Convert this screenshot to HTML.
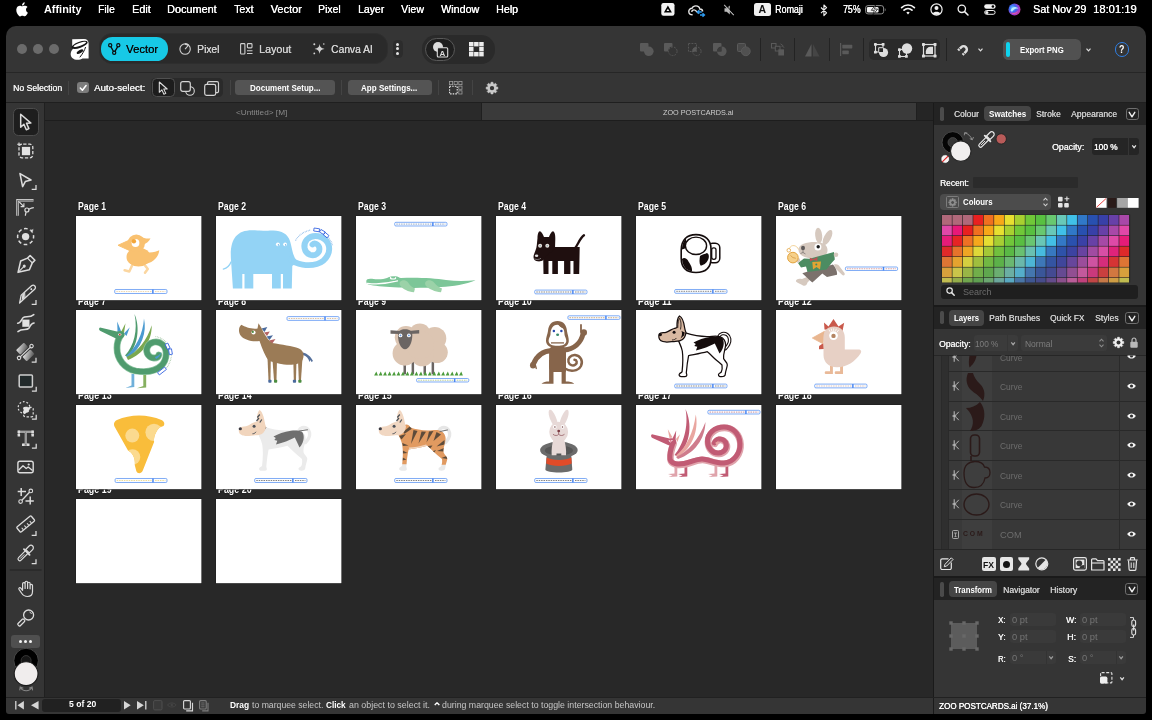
<!DOCTYPE html>
<html lang="en">
<head>
<meta charset="utf-8">
<title>Affinity - ZOO POSTCARDS.ai</title>
<style>
*{box-sizing:border-box;margin:0;padding:0}
html,body{width:1152px;height:720px;overflow:hidden;background:#000}
body{font-family:"Liberation Sans","DejaVu Sans",sans-serif;color:#fff;font-size:9px;position:relative}
.abs{position:absolute}
svg{display:block;overflow:visible}
.t{position:absolute;white-space:nowrap;transform-origin:0 50%}
#menubar{will-change:transform;position:absolute;left:0;top:0;width:1152px;height:26px;background:#000}
#win{will-change:transform;position:absolute;left:0;top:0;width:1152px;height:720px;background:#282828;clip-path:inset(26px 6px 6px 6px round 10px 10px 3px 3px)}
section{position:absolute;left:0;top:0;width:0;height:0}

</style>
</head>
<body>
<div id="menubar">
<svg class="abs" style="left:15.8px;top:1.6px;" width="12" height="14" viewBox="0 0 12 14"><path fill="#fff" d="M8.9 3.4c.5-.6.9-1.5.8-2.4-.8 0-1.7.5-2.3 1.200-.5.6-.9 1.500-.8 2.300.9.100 1.800-.4 2.300-1.100zM9.700 4.700c-1.300-.100-2.400.7-3 .7-.6 0-1.500-.7-2.500-.7C2.900 4.700 1.700 5.500 1 6.700c-1.400 2.400-.4 6 1 7.900.7.900 1.500 2 2.500 2 1 0 1.400-.7 2.600-.7 1.200 0 1.500.7 2.600.6 1.100 0 1.700-1 2.400-1.900.8-1.100 1.100-2.100 1.100-2.200 0 0-2.100-.8-2.100-3.200 0-2 1.600-2.900 1.700-3-.9-1.400-2.400-1.500-2.900-1.500z" transform="scale(.9) translate(0,-.6)"/></svg>
<div class="t" style="left:43.7px;top:3px;font-size:11px;line-height:12px;height:12px;color:#fff;transform:scaleX(0.990);font-weight:bold;">Affinity</div>
<div class="t" style="left:98.2px;top:3px;font-size:11px;line-height:12px;height:12px;color:#fff;transform:scaleX(0.937);text-shadow:.3px 0 0 #fff;">File</div>
<div class="t" style="left:131.9px;top:3px;font-size:11px;line-height:12px;height:12px;color:#fff;transform:scaleX(0.981);text-shadow:.3px 0 0 #fff;">Edit</div>
<div class="t" style="left:167.0px;top:3px;font-size:11px;line-height:12px;height:12px;color:#fff;transform:scaleX(0.987);text-shadow:.3px 0 0 #fff;">Document</div>
<div class="t" style="left:234.0px;top:3px;font-size:11px;line-height:12px;height:12px;color:#fff;transform:scaleX(0.967);text-shadow:.3px 0 0 #fff;">Text</div>
<div class="t" style="left:270.6px;top:3px;font-size:11px;line-height:12px;height:12px;color:#fff;text-shadow:.3px 0 0 #fff;">Vector</div>
<div class="t" style="left:318.4px;top:3px;font-size:11px;line-height:12px;height:12px;color:#fff;transform:scaleX(0.944);text-shadow:.3px 0 0 #fff;">Pixel</div>
<div class="t" style="left:357.5px;top:3px;font-size:11px;line-height:12px;height:12px;color:#fff;transform:scaleX(0.949);text-shadow:.3px 0 0 #fff;">Layer</div>
<div class="t" style="left:401.0px;top:3px;font-size:11px;line-height:12px;height:12px;color:#fff;transform:scaleX(0.964);text-shadow:.3px 0 0 #fff;">View</div>
<div class="t" style="left:440.9px;top:3px;font-size:11px;line-height:12px;height:12px;color:#fff;transform:scaleX(0.974);text-shadow:.3px 0 0 #fff;">Window</div>
<div class="t" style="left:496.0px;top:3px;font-size:11px;line-height:12px;height:12px;color:#fff;transform:scaleX(0.972);text-shadow:.3px 0 0 #fff;">Help</div>
<svg class="abs" style="left:661px;top:3px;" width="14" height="13" viewBox="0 0 14 13"><rect x=".3" y="0" width="13.2" height="12.8" rx="2.2" fill="#f2f2f2"/><path d="M6.9 2.600 L10.900 9.600 H2.900 Z M6.900 5.700 L5.500 8.100 H8.300 Z" fill="#000" fill-rule="evenodd"/></svg>
<svg class="abs" style="left:688px;top:4.5px;" width="18" height="12" viewBox="0 0 18 12"><path d="M4.600 9.800 C1.800 9.800 .8 7.900 .8 6.500 C.8 4.700 2.200 3.300 4 3.300 C4.700 1.700 6.200 .9 7.800 .9 C10.200 .9 11.600 2.600 11.800 4 C13.600 4 14.600 5.200 14.600 6.500" fill="none" stroke="#e6e6e6" stroke-width="1.400"/><path d="M3.800 7 C3.800 5.600 5 4.800 6 4.800 C7.500 4.800 8 5.900 9 6.900 L10.500 8.400" fill="none" stroke="#e6e6e6" stroke-width="1.300"/><path d="M9.300 7 h4.500 M11.300 5.300 L9.300 7 l2 1.700 M16.500 10 h-4.500 M14.500 8.300 l2 1.700 -2 1.700" fill="none" stroke="#2d9bf0" stroke-width="1.300"/></svg>
<svg class="abs" style="left:723px;top:4px;" width="12" height="12" viewBox="0 0 12 12"><path d="M1.500 4.300 h2.200 L6.800 1.500 v9 L3.700 7.700 H1.500z" fill="#b9b9b9"/><path d="M1.200 .8 L10.800 11.200" stroke="#b9b9b9" stroke-width="1.100"/><path d="M2.200 .3 L11.600 10.600" stroke="#000" stroke-width=".8"/></svg>
<div class="abs" style="left:753.7px;top:2.6px;width:17.299999999999955px;height:13.200000000000001px;background:#f0f0f0;border-radius:2.5px;"></div>
<div class="t" style="left:758.6px;top:3px;font-size:10.5px;line-height:12px;height:12px;color:#111;font-weight:bold;">A</div>
<div class="t" style="left:775.2px;top:4px;font-size:10px;line-height:11px;height:11px;color:#fff;transform:scaleX(0.893);text-shadow:.25px 0 0 #fff;">Romaji</div>
<svg class="abs" style="left:820px;top:3.5px;" width="8" height="13" viewBox="0 0 8 13"><path d="M1 3.500 L6.600 8.900 L3.900 11.600 V1 L6.600 3.700 L1 9.100" fill="none" stroke="#f2f2f2" stroke-width="1.100" stroke-linejoin="round"/></svg>
<div class="t" style="left:843.0px;top:3px;font-size:10.5px;line-height:12px;height:12px;color:#fff;transform:scaleX(0.833);text-shadow:.3px 0 0 #fff;">75%</div>
<svg class="abs" style="left:864.5px;top:5px;" width="22" height="10" viewBox="0 0 22 10"><rect x=".6" y=".6" width="18" height="8.300" rx="2.400" fill="none" stroke="#8c8c8c" stroke-width="1"/><rect x="1.900" y="1.900" width="11.600" height="5.700" rx="1.300" fill="#f2f2f2"/><path d="M19.800 3.200 c1.100.2 1.100 2.900 0 3.100z" fill="#8c8c8c"/><path d="M10.600 -.2 L6.300 5.300 h3 L8 9.800 l4.600-5.700 h-3.100z" fill="#f2f2f2" stroke="#000" stroke-width=".7"/></svg>
<svg class="abs" style="left:901px;top:4px;" width="14" height="11" viewBox="0 0 14 11"><path d="M.6 3.600 C4.200 .1 9.800 .1 13.400 3.600" fill="none" stroke="#f2f2f2" stroke-width="1.700" stroke-linecap="round"/><path d="M3 6.200 C5.300 4 8.700 4 11 6.200" fill="none" stroke="#f2f2f2" stroke-width="1.700" stroke-linecap="round"/><path d="M5.300 8.500 C6.300 7.600 7.700 7.600 8.700 8.500 L7 10.400z" fill="#f2f2f2"/></svg>
<svg class="abs" style="left:929.5px;top:3px;" width="13" height="13" viewBox="0 0 13 13"><circle cx="6.500" cy="6.500" r="5.600" fill="none" stroke="#f2f2f2" stroke-width="1.200"/><circle cx="6.500" cy="5" r="2" fill="#f2f2f2"/><path d="M2.700 10.300 C3.500 8.200 9.500 8.200 10.300 10.300 C8.500 12.300 4.500 12.300 2.700 10.300z" fill="#f2f2f2"/></svg>
<svg class="abs" style="left:956.5px;top:3.5px;" width="12" height="12" viewBox="0 0 12 12"><circle cx="4.800" cy="4.800" r="3.700" fill="none" stroke="#f2f2f2" stroke-width="1.300"/><path d="M7.600 7.600 L11 11" stroke="#f2f2f2" stroke-width="1.500" stroke-linecap="round"/></svg>
<svg class="abs" style="left:983.5px;top:4px;" width="12" height="11" viewBox="0 0 12 11"><rect x=".2" y=".2" width="11.400" height="4.600" rx="2.300" fill="#f2f2f2"/><circle cx="8.900" cy="2.500" r="1.300" fill="#000"/><rect x=".7" y="6.500" width="10.400" height="3.800" rx="1.900" fill="none" stroke="#f2f2f2" stroke-width="1"/><circle cx="2.900" cy="8.400" r="1.500" fill="#f2f2f2"/></svg>
<svg class="abs" style="left:1008px;top:3px;" width="13" height="13" viewBox="0 0 13 13"><defs><radialGradient id="sg" cx=".35" cy=".4" r=".8"><stop offset="0" stop-color="#6fd0ff"/><stop offset=".35" stop-color="#3a6cf0"/><stop offset=".65" stop-color="#a03ad0"/><stop offset="1" stop-color="#e04070"/></radialGradient></defs><circle cx="6.500" cy="6.500" r="6" fill="url(#sg)"/><path d="M2.500 7.500 C4.500 3 8 3.500 10.500 5.500 C8 5 5.500 6 4 9z" fill="#c8f4ff" opacity=".85"/><path d="M3 9.500 C5 10.500 8.500 10 10.500 7.500 C9 11.500 5 12 3 9.500z" fill="#ff5a90" opacity=".8"/></svg>
<div class="t" style="left:1032.7px;top:3px;font-size:11px;line-height:12px;height:12px;color:#fff;transform:scaleX(0.979);text-shadow:.3px 0 0 #fff;">Sat Nov 29</div>
<div class="t" style="left:1093.0px;top:3px;font-size:11px;line-height:12px;height:12px;color:#fff;transform:scaleX(1.018);text-shadow:.3px 0 0 #fff;">18:01:19</div>
</div>
<div id="win">
<section id="toolbar">
<div class="abs" style="left:6px;top:26px;width:1140px;height:46px;background:#353535;"></div>
<div class="abs" style="left:6px;top:71.5px;width:1140px;height:1.0px;background:#262626;"></div>
<div class="abs" style="left:16.5px;top:44px;width:10.0px;height:10px;background:#6b6b6b;border-radius:5px;"></div>
<div class="abs" style="left:32.5px;top:44px;width:10.0px;height:10px;background:#6b6b6b;border-radius:5px;"></div>
<div class="abs" style="left:48.5px;top:44px;width:10.0px;height:10px;background:#6b6b6b;border-radius:5px;"></div>
<svg class="abs" style="left:70px;top:38px;" width="19" height="22" viewBox="0 0 19 22"><path d="M2.200 1.300 L14 .9 C17 .9 18.600 2.800 18.600 5.500 L18.600 20.500 L12.500 20.500 C10 22.300 4.800 22.500 2.300 20 C-.3 17.300 .3 13 3.800 10 L2.200 8.500 Z" fill="#fff"/><ellipse cx="9.600" cy="6.900" rx="8.600" ry="3" transform="rotate(-20 9.600 6.900)" fill="#171717"/><ellipse cx="9.800" cy="6.300" rx="6.700" ry="1.450" transform="rotate(-20 9.800 6.300)" fill="#fff"/><ellipse cx="10" cy="13.700" rx="3.700" ry="1.550" transform="rotate(-30 10 13.700)" fill="#171717"/><path d="M15.600 9 C14.500 12.500 12.500 16 9.800 19.300" fill="none" stroke="#171717" stroke-width="1"/></svg>
<div class="abs" style="left:98.5px;top:33px;width:289.0px;height:30.5px;background:#2a2a2a;border-radius:13px;border:1px solid #2e2e2e;"></div>
<div class="abs" style="left:101px;top:36.5px;width:67.30000000000001px;height:24.5px;background:#17c9e6;border-radius:11.5px;"></div>
<svg class="abs" style="left:107.5px;top:42.7px;" width="13" height="13" viewBox="0 0 13 13"><path d="M2.300 2.600 L6.200 9.700 L10.300 2.600" fill="none" stroke="#0c0c0c" stroke-width="1.300"/><circle cx="2.200" cy="2.300" r="1.600" fill="#17c9e6" stroke="#0c0c0c" stroke-width="1.200"/><circle cx="10.300" cy="2.300" r="1.600" fill="#17c9e6" stroke="#0c0c0c" stroke-width="1.200"/><circle cx="6.200" cy="9.800" r="1.600" fill="#17c9e6" stroke="#0c0c0c" stroke-width="1.200"/></svg>
<div class="t" style="left:126.2px;top:43px;font-size:10.5px;line-height:12px;height:12px;color:#0a0a0a;transform:scaleX(1.075);text-shadow:.3px 0 0 #0a0a0a;">Vector</div>
<svg class="abs" style="left:178.5px;top:42.7px;" width="12" height="12" viewBox="0 0 12 12"><circle cx="6.100" cy="6.100" r="5.200" fill="none" stroke="#cfcfcf" stroke-width="1.100"/><path d="M6.100 6.100 L9.200 2.500" stroke="#cfcfcf" stroke-width="1.100"/><path d="M6.100 1 A5.200 5.200 0 0 1 9.600 2.300" stroke="#cfcfcf" stroke-width="1.800" fill="none"/></svg>
<div class="t" style="left:196.9px;top:43px;font-size:10.5px;line-height:12px;height:12px;color:#d2d2d2;transform:scaleX(0.984);text-shadow:.25px 0 0 #d2d2d2;">Pixel</div>
<svg class="abs" style="left:240px;top:43px;" width="13" height="12" viewBox="0 0 13 12"><rect x=".6" y=".6" width="4.300" height="10.400" rx=".8" fill="none" stroke="#cfcfcf" stroke-width="1.100"/><rect x="7.400" y=".6" width="4.600" height="4.300" rx=".8" fill="none" stroke="#cfcfcf" stroke-width="1.100"/><path d="M7 7.800 h5.500 M7 10.500 h5.500" stroke="#cfcfcf" stroke-width="1.100"/></svg>
<div class="t" style="left:258.5px;top:43px;font-size:10.5px;line-height:12px;height:12px;color:#d2d2d2;transform:scaleX(1.018);text-shadow:.25px 0 0 #d2d2d2;">Layout</div>
<svg class="abs" style="left:311.5px;top:42px;" width="14" height="14" viewBox="0 0 14 14"><path d="M7.600 1.800 C8.100 5.200 9 6.300 12.600 6.900 C9 7.500 8.100 8.600 7.600 12 C7.100 8.600 6.200 7.500 2.600 6.900 C6.200 6.300 7.100 5.200 7.600 1.800Z" fill="#d2d2d2"/><circle cx="2.300" cy="2.300" r="1" fill="#d2d2d2"/><circle cx="11.800" cy="2" r=".8" fill="#d2d2d2"/><circle cx="2.300" cy="11.400" r=".9" fill="#d2d2d2"/></svg>
<div class="t" style="left:330.8px;top:43px;font-size:10.5px;line-height:12px;height:12px;color:#d2d2d2;transform:scaleX(0.979);text-shadow:.25px 0 0 #d2d2d2;">Canva AI</div>
<div class="abs" style="left:393px;top:40px;width:9.5px;height:18px;background:#2c2c2c;border-radius:4.5px;"></div>
<div class="abs" style="left:396.1px;top:42.6px;width:3.1999999999999886px;height:3.200000000000003px;background:#e4e4e4;border-radius:1.6px;"></div>
<div class="abs" style="left:396.1px;top:47.199999999999996px;width:3.1999999999999886px;height:3.200000000000003px;background:#e4e4e4;border-radius:1.6px;"></div>
<div class="abs" style="left:396.1px;top:51.9px;width:3.1999999999999886px;height:3.200000000000003px;background:#e4e4e4;border-radius:1.6px;"></div>
<div class="abs" style="left:421.7px;top:35px;width:72.90000000000003px;height:28.5px;background:#2a2a2a;border-radius:14px;"></div>
<div class="abs" style="left:424.8px;top:38px;width:30.19999999999999px;height:23px;background:#1f1f1f;border-radius:11.5px;border:1px solid #595959;"></div>
<svg class="abs" style="left:432px;top:41px;" width="17" height="17" viewBox="0 0 17 17"><circle cx="6" cy="6" r="5" fill="#dcdcdc"/><rect x="5.300" y="6.700" width="10.400" height="9.300" rx="1" fill="#1f1f1f" stroke="#dcdcdc" stroke-width="1.100"/><text x="10.500" y="14.600" font-size="8" font-weight="bold" text-anchor="middle" fill="#dcdcdc" font-family="Liberation Sans, sans-serif">A</text></svg>
<svg class="abs" style="left:469px;top:42px;" width="15" height="15" viewBox="0 0 15 15"><rect x="0.0" y="0.0" width="4.500" height="4.400" fill="#ececec"/><rect x="5.1" y="0.0" width="4.500" height="4.400" fill="#ececec"/><rect x="10.2" y="0.0" width="4.500" height="4.400" fill="#ececec"/><rect x="0.0" y="5.0" width="4.500" height="4.400" fill="#ececec"/><rect x="10.2" y="5.0" width="4.500" height="4.400" fill="#ececec"/><rect x="0.0" y="10.0" width="4.500" height="4.400" fill="#ececec"/><rect x="5.1" y="10.0" width="4.500" height="4.400" fill="#ececec"/><rect x="10.2" y="10.0" width="4.500" height="4.400" fill="#ececec"/></svg>
<svg class="abs" style="left:640.4px;top:43px;" width="14" height="13" viewBox="0 0 14 13"><rect x="0" y="0" width="8.500" height="8.500" rx="1" fill="#5a5a5a"/><circle cx="8.800" cy="8.300" r="4.800" fill="#5a5a5a"/></svg>
<svg class="abs" style="left:664.4px;top:43px;" width="14" height="13" viewBox="0 0 14 13"><path d="M0 1 a1 1 0 0 1 1-1 h6.500 a1 1 0 0 1 1 1 v2.600 A4.800 4.800 0 0 0 4.100 8.500 H1 a1 1 0 0 1 -1 -1z" fill="#5a5a5a"/><circle cx="8.800" cy="8.300" r="4.300" fill="none" stroke="#5a5a5a" stroke-width=".9" stroke-dasharray="1.800 1.200"/></svg>
<svg class="abs" style="left:688px;top:43px;" width="14" height="13" viewBox="0 0 14 13"><rect x=".5" y=".5" width="8" height="8" fill="none" stroke="#5a5a5a" stroke-width=".9" stroke-dasharray="1.800 1.200"/><circle cx="8.800" cy="8.300" r="4.300" fill="none" stroke="#5a5a5a" stroke-width=".9" stroke-dasharray="1.800 1.200"/><path d="M4.300 8.500 A4.600 4.600 0 0 1 8.500 3.700 V8.500z" fill="#5a5a5a"/></svg>
<svg class="abs" style="left:712.7px;top:43px;" width="14" height="13" viewBox="0 0 14 13"><path d="M0 1 a1 1 0 0 1 1-1 h6.500 a1 1 0 0 1 1 1 v2.600 A4.800 4.800 0 0 0 4.100 8.500 H1 a1 1 0 0 1 -1 -1z" fill="#5a5a5a"/><path d="M8.500 3.500 A4.800 4.800 0 1 1 4 8.500 H8.500z" fill="#5a5a5a" opacity=".95"/><path d="M4.300 8.300 A4.600 4.600 0 0 1 8.300 3.800 V8.300z" fill="#3b3b3b"/></svg>
<svg class="abs" style="left:736.7px;top:43px;" width="14" height="13" viewBox="0 0 14 13"><rect x=".5" y=".5" width="8" height="8" rx="1" fill="#484848" stroke="#5a5a5a" stroke-width="1"/><circle cx="8.800" cy="8.300" r="4.400" fill="#505050" stroke="#5a5a5a" stroke-width="1"/></svg>
<div class="abs" style="left:760.1px;top:38px;width:1.0px;height:22.5px;background:#232323;"></div>
<div class="abs" style="left:794.1px;top:38px;width:1.0px;height:22.5px;background:#232323;"></div>
<div class="abs" style="left:828.9px;top:38px;width:1.0px;height:22.5px;background:#232323;"></div>
<div class="abs" style="left:862.8px;top:38px;width:1.0px;height:22.5px;background:#232323;"></div>
<div class="abs" style="left:945.5px;top:38px;width:1.0px;height:22.5px;background:#232323;"></div>
<svg class="abs" style="left:770.6px;top:43px;" width="14" height="13" viewBox="0 0 14 13"><rect x=".5" y=".5" width="4.500" height="4.500" fill="none" stroke="#5a5a5a" stroke-width="1"/><rect x="4.300" y="3.300" width="4.700" height="4.700" fill="#333" stroke="#5a5a5a" stroke-width="1"/><path d="M7.300 6.300 h5.700 v6.200 h-5.700z" fill="#5a5a5a"/><path d="M9.500 .8 l2.300 1.700 -1 1.300 M11.300 2.700 l1.700 2" stroke="#5a5a5a" stroke-width=".9" fill="none"/></svg>
<svg class="abs" style="left:805px;top:43.5px;" width="15" height="13" viewBox="0 0 15 13"><path d="M6.500 0 V12.500 H0z" fill="#5a5a5a"/><path d="M8 0 V12.500 H14.500z" fill="#454545"/></svg>
<svg class="abs" style="left:840px;top:43px;" width="13" height="13" viewBox="0 0 13 13"><path d="M.6 0 V13" stroke="#5a5a5a" stroke-width="1.200"/><rect x="2.300" y="1.800" width="10" height="3.600" rx=".6" fill="#5a5a5a"/><rect x="2.300" y="7.600" width="6.500" height="3.600" rx=".6" fill="#5a5a5a"/></svg>
<div class="abs" style="left:868.5px;top:38.7px;width:71.89999999999998px;height:21.599999999999994px;background:#2a2a2a;border-radius:5px;"></div>
<svg class="abs" style="left:873.7px;top:42.5px;" width="15" height="15" viewBox="0 0 15 15"><rect x="1.500" y="1.500" width="7.500" height="7.500" fill="none" stroke="#dedede" stroke-width="1.100"/><circle cx="9.500" cy="9.500" r="4.600" fill="#dedede"/><path d="M4.200 4.200 h4.800 v4.800 h-4.800z" fill="#2a2a2a"/><path d="M4.700 9 V4.700 H9" fill="none" stroke="#dedede" stroke-width="1"/><g fill="#dedede"><rect x="0" y="0" width="2.800" height="2.800" rx=".6"/><rect x="7.700" y="0" width="2.800" height="2.800" rx=".6"/><rect x="0" y="7.700" width="2.800" height="2.800" rx=".6"/></g></svg>
<svg class="abs" style="left:897.7px;top:42.5px;" width="15" height="15" viewBox="0 0 15 15"><circle cx="9" cy="5.500" r="5.200" fill="#dedede"/><rect x="1.500" y="6.500" width="7" height="7" fill="none" stroke="#dedede" stroke-width="1.100"/><g fill="#dedede"><rect x="0" y="5.200" width="2.800" height="2.800" rx=".6"/><rect x="0" y="12" width="2.800" height="2.800" rx=".6"/><rect x="7" y="12" width="2.800" height="2.800" rx=".6"/></g></svg>
<svg class="abs" style="left:922px;top:42.5px;" width="15" height="15" viewBox="0 0 15 15"><rect x="1.500" y="1.500" width="11.500" height="11.500" fill="none" stroke="#dedede" stroke-width="1.200"/><path d="M3.800 11 V8.500 A4.800 4.800 0 0 1 8.500 3.800 H11 V11z" fill="#dedede"/><g fill="#dedede"><rect x="0" y="0" width="2.900" height="2.900" rx=".6"/><rect x="11.600" y="0" width="2.900" height="2.900" rx=".6"/><rect x="0" y="11.600" width="2.900" height="2.900" rx=".6"/><rect x="11.600" y="11.600" width="2.900" height="2.900" rx=".6"/></g></svg>
<svg class="abs" style="left:955.3px;top:41.5px;" width="16" height="16" viewBox="0 0 16 16"><g transform="translate(8.200 7.800) rotate(45)"><path d="M-3.200 4 V-.6 A3.200 3.200 0 0 1 3.200 -.6 V4" fill="none" stroke="#dedede" stroke-width="2.500"/><path d="M-4.700 1.900 H-1.700 M1.700 1.900 H4.700" stroke="#353535" stroke-width=".9"/></g></svg>
<svg class="abs" style="left:977.5px;top:48px;" width="5" height="4" viewBox="0 0 5 4"><path d="M.5 .6 L2.500 2.800 L4.500 .6" fill="none" stroke="#dedede" stroke-width="1.200"/></svg>
<div class="abs" style="left:1003px;top:38.7px;width:77.59999999999991px;height:21.599999999999994px;background:#515151;border-radius:5.5px;"></div>
<div class="abs" style="left:1006.2px;top:42px;width:4.0px;height:15px;background:#0fd3ee;border-radius:2px;"></div>
<div class="t" style="left:1019.6px;top:45px;font-size:9px;line-height:10px;height:10px;color:#fff;transform:scaleX(0.865);font-weight:bold;">Export PNG</div>
<svg class="abs" style="left:1085.5px;top:48px;" width="5" height="4" viewBox="0 0 5 4"><path d="M.5 .6 L2.500 2.800 L4.500 .6" fill="none" stroke="#dedede" stroke-width="1.200"/></svg>
<div class="abs" style="left:1114.7px;top:42.4px;width:14.599999999999909px;height:14.600000000000001px;border-radius:7.3px;border:1.300px solid #2f80e6;"></div>
<div class="t" style="left:1119.4px;top:44px;font-size:10px;line-height:11px;height:11px;color:#fff;transform:scaleX(0.884);font-weight:bold;">?</div>
</section>
<section id="context">
<div class="abs" style="left:6px;top:72.5px;width:1140px;height:29.5px;background:#353535;"></div>
<div class="abs" style="left:6px;top:101.5px;width:1140px;height:1.0px;background:#1f1f1f;"></div>
<div class="t" style="left:12.9px;top:83px;font-size:9px;line-height:10px;height:10px;color:#f4f4f4;transform:scaleX(0.960);text-shadow:.25px 0 0 #f4f4f4;">No Selection</div>
<div class="abs" style="left:67.5px;top:80.5px;width:1.0px;height:14.0px;background:#444444;"></div>
<div class="abs" style="left:77.3px;top:81.7px;width:11.900000000000006px;height:11.599999999999994px;background:#7c7c7c;border-radius:3px;"></div>
<svg class="abs" style="left:77px;top:81.8px;" width="12.2" height="11.8" viewBox="0 0 12.2 11.8"><path d="M3.300 6.100 L5.400 8.300 L9.100 3.500" fill="none" stroke="#fff" stroke-width="1.500" stroke-linecap="round" stroke-linejoin="round"/></svg>
<div class="t" style="left:93.7px;top:83px;font-size:9px;line-height:10px;height:10px;color:#f4f4f4;transform:scaleX(1.075);text-shadow:.25px 0 0 #f4f4f4;">Auto-select:</div>
<div class="abs" style="left:151px;top:78px;width:71.5px;height:19.200000000000003px;background:#2a2a2a;border-radius:4.5px;"></div>
<div class="abs" style="left:151.5px;top:78.2px;width:23.30000000000001px;height:18.799999999999997px;background:#1d1d1d;border-radius:4.5px;border:1px solid #505050;"></div>
<svg class="abs" style="left:158px;top:80.5px;" width="11" height="15" viewBox="0 0 11 15"><path d="M1.300 1 L1.300 11.300 L3.900 8.900 L5.900 13.300 L7.800 12.400 L5.800 8.100 L9.200 8 Z" fill="#1d1d1d" stroke="#e0e0e0" stroke-width="1.050" stroke-linejoin="round"/></svg>
<svg class="abs" style="left:180px;top:80.7px;" width="15" height="15" viewBox="0 0 15 15"><circle cx="10" cy="10" r="4.300" fill="none" stroke="#d4d4d4" stroke-width="1.100"/><rect x=".7" y=".7" width="9.600" height="9.600" rx="2" fill="#2a2a2a" stroke="#d4d4d4" stroke-width="1.200"/></svg>
<svg class="abs" style="left:203.5px;top:80.7px;" width="15" height="15" viewBox="0 0 15 15"><path d="M3.500 3 V2.200 a1.500 1.500 0 0 1 1.500-1.500 h8 a1.500 1.500 0 0 1 1.500 1.500 v8 a1.500 1.500 0 0 1 -1.500 1.500 H12" fill="none" stroke="#d4d4d4" stroke-width="1.200"/><rect x=".7" y="3.400" width="11" height="11" rx="1.800" fill="none" stroke="#d4d4d4" stroke-width="1.200"/></svg>
<div class="abs" style="left:229.5px;top:80.3px;width:1.0px;height:14.400000000000006px;background:#444444;"></div>
<div class="abs" style="left:340.5px;top:80.3px;width:1.0px;height:14.400000000000006px;background:#444444;"></div>
<div class="abs" style="left:437.8px;top:80.3px;width:1.0px;height:14.400000000000006px;background:#444444;"></div>
<div class="abs" style="left:472.2px;top:80.3px;width:1.0px;height:14.400000000000006px;background:#444444;"></div>
<div class="abs" style="left:235.4px;top:80px;width:99.4px;height:15px;background:#545454;border-radius:3.5px;"></div>
<div class="t" style="left:249.8px;top:83px;font-size:9px;line-height:10px;height:10px;color:#fff;transform:scaleX(0.891);font-weight:bold;">Document Setup...</div>
<div class="abs" style="left:347.7px;top:80px;width:84.0px;height:15px;background:#545454;border-radius:3.5px;"></div>
<div class="t" style="left:361.2px;top:83px;font-size:9px;line-height:10px;height:10px;color:#fff;transform:scaleX(0.894);font-weight:bold;">App Settings...</div>
<svg class="abs" style="left:448.7px;top:80.8px;" width="14" height="14" viewBox="0 0 14 14"><rect x="0.4" y=".4" width="3.200" height="3.200" fill="none" stroke="#9c9c9c" stroke-width=".8"/><rect x="5.1000000000000005" y=".4" width="3.200" height="3.200" fill="none" stroke="#9c9c9c" stroke-width=".8"/><rect x="9.8" y=".4" width="3.200" height="3.200" fill="none" stroke="#9c9c9c" stroke-width=".8"/><rect x="9.800" y="5.1000000000000005" width="3.200" height="3.200" fill="none" stroke="#9c9c9c" stroke-width=".8"/><rect x="9.800" y="9.8" width="3.200" height="3.200" fill="none" stroke="#9c9c9c" stroke-width=".8"/><rect x=".6" y="5.300" width="7.600" height="7.600" fill="none" stroke="#e8e8e8" stroke-width="1.100" stroke-dasharray="1.500 1.100"/></svg>
<svg class="abs" style="left:484px;top:79.5px;" width="16" height="16" viewBox="0 0 16 16"><path d="M13.81 7.10 L13.81 9.10 L12.20 9.31 L11.82 10.21 L12.82 11.51 L11.41 12.92 L10.11 11.92 L9.21 12.30 L9.00 13.91 L7.00 13.91 L6.79 12.30 L5.89 11.92 L4.59 12.92 L3.18 11.51 L4.18 10.21 L3.80 9.31 L2.19 9.10 L2.19 7.10 L3.80 6.89 L4.18 5.99 L3.18 4.69 L4.59 3.28 L5.89 4.28 L6.79 3.90 L7.00 2.29 L9.00 2.29 L9.21 3.90 L10.11 4.28 L11.41 3.28 L12.82 4.69 L11.82 5.99 L12.20 6.89Z" fill="#c9c9c9" stroke="#c9c9c9" stroke-width=".6" stroke-linejoin="round"/><circle cx="8" cy="8.1" r="2.2" fill="#353535"/></svg>
</section>
<section id="tools">
<div class="abs" style="left:6px;top:102.5px;width:38px;height:595.0px;background:#353535;"></div>
<div class="abs" style="left:43.6px;top:102.5px;width:1.0px;height:595.0px;background:#202020;"></div>
<div class="abs" style="left:12.5px;top:108.2px;width:26.700000000000003px;height:27.39999999999999px;background:#1e1e1e;border-radius:5.5px;border:1.200px solid #4c4c4c;"></div>
<svg class="abs" style="left:0px;top:0px;" width="50" height="720" viewBox="0 0 50 720"><path d="M20.700 114.300 L20.700 127.300 L23.900 124.300 L26.300 129.800 L28.900 128.600 L26.500 123.300 L30.900 123.100 Z" fill="#1e1e1e" stroke="#dcdcdc" stroke-width="1.500" stroke-linejoin="round"/>
<rect x="19" y="144.200" width="13.800" height="13.600" rx="3" fill="none" stroke="#dcdcdc" stroke-width="1.300" stroke-dasharray="3.300 1.700" stroke-dashoffset="-1.200"/><rect x="21.900" y="146.900" width="8.200" height="8.300" fill="#e2e2e2"/><path d="M17.200 144.300 h3.600 M19 142.500 v3.600" stroke="#dcdcdc" stroke-width="1.100"/>
<path d="M20 173.600 L31 180 L25.300 181.600 L22.600 186.600 Z" fill="none" stroke="#dcdcdc" stroke-width="1.550" stroke-linejoin="round"/><path d="M31.7 189.3 H36 V185.0" fill="none" stroke="#dcdcdc" stroke-width="1.250"/>
<path d="M33.500 200.300 H17.500 V215.800" fill="none" stroke="#dcdcdc" stroke-width="2.400"/><path d="M33.500 200.300 H17.500 V215.800" fill="none" stroke="#353535" stroke-width=".7"/><path d="M19.300 202 L23.600 206.300 M23.900 203.300 V206.600 H20.600" fill="none" stroke="#dcdcdc" stroke-width="1.100"/><circle cx="26.900" cy="210" r="2" fill="none" stroke="#dcdcdc" stroke-width="1.200"/><path d="M28.800 209.300 C30.500 208.300 32 207.700 33.800 207.600 M26.200 212 C25.700 213.300 25.400 214.500 25.400 215.800" fill="none" stroke="#dcdcdc" stroke-width="1.200"/>
<circle cx="25.600" cy="236.600" r="8" fill="none" stroke="#dcdcdc" stroke-width="1.500" stroke-dasharray="3.700 2.580" stroke-dashoffset="1.800"/><circle cx="25.600" cy="236.600" r="3.700" fill="#e0e0e0"/><path d="M29.300 230.300 L33.600 228.800 L32.600 233.500 Z" fill="#dcdcdc" stroke="#353535" stroke-width=".5"/>
<g transform="translate(25.400 265) rotate(45) scale(1.060)"><path d="M-3.200 -9.500 H3.200 V-6 L5.800 .5 L0 9.800 L-5.800 .5 L-3.200 -6 Z" fill="none" stroke="#dcdcdc" stroke-width="1.450" stroke-linejoin="round"/><path d="M-3.200 -6 H3.200" stroke="#dcdcdc" stroke-width="1.200"/><path d="M0 9.500 V2.500" stroke="#dcdcdc" stroke-width="1.100"/><circle cx="0" cy="1.500" r="1.400" fill="#dcdcdc"/></g>
<g transform="translate(25.700 294.200) rotate(48)"><path d="M-2.300 -10 a2.300 2.300 0 0 1 4.600 0 V-1 L2.500 10.500 L-2.300 4 Z" fill="none" stroke="#dcdcdc" stroke-width="1.300" stroke-linejoin="round"/><circle cx="0" cy="-7.500" r="1" fill="#dcdcdc"/><path d="M-2.300 -.5 L2.300 3" stroke="#dcdcdc" stroke-width="1.100"/><path d="M-1.800 .8 L2.300 3.500 L1.700 7 L-1.800 3 Z" fill="#dcdcdc"/></g><path d="M31.7 304.4 H36 V300.09999999999997" fill="none" stroke="#dcdcdc" stroke-width="1.250"/>
<path d="M17.600 323.300 C21 323.300 21.300 319.500 23 317.800 C25.300 315.500 29.500 318.300 33.800 314.600 M17.900 331.600 C22.200 327.900 26.400 330.700 28.700 328.400 C30.400 326.700 30.700 322.900 34.100 322.900" fill="none" stroke="#dcdcdc" stroke-width="1.500" stroke-linecap="round"/><rect x="22.300" y="319.600" width="7.200" height="7.200" fill="#e2e2e2"/>
<defs><linearGradient id="gt" x1="0" y1="0" x2="1" y2="1"><stop offset="0" stop-color="#e6e6e6"/><stop offset="1" stop-color="#e6e6e6" stop-opacity=".15"/></linearGradient></defs><g transform="translate(25.300 352) rotate(-43.500)"><rect x="-5.500" y="-7.800" width="11" height="6.300" rx="1" fill="url(#gt)"/><rect x="-5.500" y="1.500" width="11" height="6.300" rx="1" fill="url(#gt)"/><path d="M-7 0 H7" stroke="#dcdcdc" stroke-width="1.200"/><circle cx="-8.600" cy="0" r="1.700" fill="#353535" stroke="#dcdcdc" stroke-width="1.100"/><circle cx="8.600" cy="0" r="1.700" fill="#353535" stroke="#dcdcdc" stroke-width="1.100"/></g><path d="M31.7 362 H36 V357.7" fill="none" stroke="#dcdcdc" stroke-width="1.250"/>
<rect x="19.200" y="375" width="13.200" height="12" rx="1" fill="#222a2b" stroke="#cfcfcf" stroke-width="1.500"/><path d="M31.900000000000002 391 H36.2 V386.7" fill="none" stroke="#dcdcdc" stroke-width="1.250"/>
<circle cx="24" cy="407.500" r="5.800" fill="none" stroke="#dcdcdc" stroke-width="1.200" stroke-dasharray="1.800 1.840"/><rect x="23.700" y="407.300" width="9.500" height="9.500" rx="1.500" fill="none" stroke="#dcdcdc" stroke-width="1.200" stroke-dasharray="2.400 1.600"/><path d="M23.700 407.300 H29.800 A5.800 5.800 0 0 1 23.700 413.300 Z" fill="#e4e4e4"/><path d="M31.900000000000002 419 H36.2 V414.7" fill="none" stroke="#dcdcdc" stroke-width="1.250"/>
<path d="M18.800 435 V431.800 H32.600 V435 M25.700 431.800 V444.800 M23.200 444.800 H28.200" fill="none" stroke="#dcdcdc" stroke-width="1.900"/><path d="M18.800 435 V431.800 H32.600 V435 M25.700 431.800 V444.800 M23.200 444.800 H28.200" fill="none" stroke="#353535" stroke-width=".5"/><g fill="#dcdcdc"><rect x="17.600" y="430.500" width="2.500" height="2.500"/><rect x="31.400" y="430.500" width="2.500" height="2.500"/><rect x="17.600" y="434" width="2.500" height="2.500"/><rect x="31.400" y="434" width="2.500" height="2.500"/><rect x="22" y="443.500" width="2.500" height="2.500"/><rect x="27" y="443.500" width="2.500" height="2.500"/></g><path d="M31.900000000000002 448 H36.2 V443.7" fill="none" stroke="#dcdcdc" stroke-width="1.250"/>
<rect x="17.900" y="461.300" width="15.300" height="11.500" rx="2" fill="none" stroke="#dcdcdc" stroke-width="1.400"/><path d="M18.500 470.200 L23 465.800 L26.200 468.600 L28.200 467 L32.600 470.600" fill="none" stroke="#dcdcdc" stroke-width="1.300" stroke-linejoin="round"/><circle cx="28.700" cy="464.500" r="1.100" fill="#dcdcdc"/>
<path d="M21.200 488 V496 M17.700 491.500 H26 M30.200 496.500 V504.500 M25.500 501 H33.800" fill="none" stroke="#dcdcdc" stroke-width="1.500"/><path d="M21.200 501 L30.200 491.500" stroke="#dcdcdc" stroke-width="1.300"/><circle cx="20.600" cy="501.600" r="1.800" fill="#353535" stroke="#dcdcdc" stroke-width="1.100"/><circle cx="30.800" cy="490.900" r="1.800" fill="#353535" stroke="#dcdcdc" stroke-width="1.100"/>
<g transform="translate(25.700 524) rotate(-40)"><rect x="-9.300" y="-3.300" width="18.600" height="6.600" rx="1" fill="none" stroke="#dcdcdc" stroke-width="1.300"/><path d="M-5.500 .3 V2.800 M-2 .3 V2.800 M1.500 .3 V2.800 M5 .3 V2.800" stroke="#dcdcdc" stroke-width="1.100"/></g><path d="M31.7 535.3 H36 V531.0" fill="none" stroke="#dcdcdc" stroke-width="1.250"/>
<g transform="translate(25.700 553) rotate(45)"><path d="M-1.800 -1.500 V8.300 a1.800 1.800 0 0 0 3.600 0 V-1.500" fill="none" stroke="#dcdcdc" stroke-width="1.200"/><path d="M0 2 V8" stroke="#dcdcdc" stroke-width=".9"/><path d="M-4 -1.500 H4" stroke="#dcdcdc" stroke-width="1.800" stroke-linecap="round"/><path d="M-2.500 -2.500 V-7 a2.500 2.900 0 0 1 5 0 V-2.500 Z" fill="none" stroke="#dcdcdc" stroke-width="1.200"/></g><path d="M31.7 563.5 H36 V559.2" fill="none" stroke="#dcdcdc" stroke-width="1.250"/>
<path d="M9.800 570 H41.600" stroke="#232323" stroke-width="1"/>
<path d="M22.600 589.500 V583.800 a1.250 1.250 0 0 1 2.500 0 V582.500 a1.250 1.250 0 0 1 2.500 0 V583.500 a1.250 1.250 0 0 1 2.500 0 V585.500 a1.200 1.200 0 0 1 2.400 0 V591.500 C32.500 594.500 30.500 596.500 27.500 596.500 C24.500 596.500 23 595.300 21.500 593 L19 589.300 C18.300 588 20 587 21 588.300 L22.600 590.300 M25.100 583.800 V588.500 M27.600 583 V588.500 M30.100 584 V588.800" fill="none" stroke="#dcdcdc" stroke-width="1.200" stroke-linejoin="round" stroke-linecap="round"/>
<circle cx="28.600" cy="615" r="5" fill="none" stroke="#dcdcdc" stroke-width="1.300"/><path d="M29.500 612 a3 3 0 0 1 2 2" fill="none" stroke="#dcdcdc" stroke-width=".9"/><g transform="translate(21.300 622.500) rotate(45)"><rect x="-1.600" y="-4" width="3.200" height="8" rx="1" fill="none" stroke="#dcdcdc" stroke-width="1.200"/></g></svg>
<div class="abs" style="left:10.9px;top:635px;width:29.200000000000003px;height:12.5px;background:#4f4f4f;border-radius:3px;"></div>
<div class="abs" style="left:19.4px;top:639.8px;width:3.0px;height:3.0px;background:#f4f4f4;border-radius:1.5px;"></div>
<div class="abs" style="left:24.2px;top:639.8px;width:3.0px;height:3.0px;background:#f4f4f4;border-radius:1.5px;"></div>
<div class="abs" style="left:29.0px;top:639.8px;width:3.0px;height:3.0px;background:#f4f4f4;border-radius:1.5px;"></div>
<svg class="abs" style="left:0px;top:640px;" width="50" height="60" viewBox="0 0 50 60"><circle cx="26.100" cy="20.600" r="12.300" fill="#000" stroke="#484848" stroke-width="1"/><circle cx="26.100" cy="20.600" r="5" fill="#161616" stroke="#353535" stroke-width="1"/><circle cx="26.100" cy="33.700" r="11.900" fill="#f0eded" stroke="#1b1b1b" stroke-width="1.100"/><path d="M20.300 47.300 C22.800 52 29.500 52 32 47.300 M19.700 50.300 L20.200 47 L23.300 48.200 M32.600 50.300 L32.100 47 L29 48.200" fill="none" stroke="#858585" stroke-width="1.050"/></svg>
</section>
<section id="canvas">
<div class="abs" style="left:44.6px;top:102.5px;width:888.4px;height:18.099999999999994px;background:#2a2a2a;"></div>
<div class="abs" style="left:916px;top:102.5px;width:17px;height:18.099999999999994px;background:#252525;"></div>
<div class="abs" style="left:481px;top:103px;width:435px;height:17px;background:#3a3a3a;"></div>
<div class="abs" style="left:44.6px;top:119.8px;width:888.4px;height:1.0px;background:#1d1d1d;"></div>
<div class="abs" style="left:480.5px;top:103px;width:1.0px;height:17px;background:#1f1f1f;"></div>
<div class="abs" style="left:915.5px;top:103px;width:1.0px;height:17px;background:#1f1f1f;"></div>
<div class="t" style="left:236.3px;top:108px;font-size:8px;line-height:9px;height:9px;color:#8a8a8a;transform:scaleX(1.030);">&lt;Untitled&gt; [M]</div>
<div class="t" style="left:663.0px;top:108px;font-size:8px;line-height:9px;height:9px;color:#cfcfcf;transform:scaleX(0.906);">ZOO POSTCARDS.ai</div>
<div class="abs" style="left:44.6px;top:120.8px;width:888.4px;height:576.7px;background:#282828;"></div>
<div class="t" style="left:78.0px;top:201px;font-size:10px;line-height:11px;height:11px;color:#ffffff;transform:scaleX(0.869);font-weight:bold;text-shadow:0 0 1.500px rgba(0,0,0,.9);">Page 1</div>
<div class="t" style="left:218.0px;top:201px;font-size:10px;line-height:11px;height:11px;color:#ffffff;transform:scaleX(0.869);font-weight:bold;text-shadow:0 0 1.500px rgba(0,0,0,.9);">Page 2</div>
<div class="t" style="left:358.0px;top:201px;font-size:10px;line-height:11px;height:11px;color:#ffffff;transform:scaleX(0.869);font-weight:bold;text-shadow:0 0 1.500px rgba(0,0,0,.9);">Page 3</div>
<div class="t" style="left:498.0px;top:201px;font-size:10px;line-height:11px;height:11px;color:#ffffff;transform:scaleX(0.869);font-weight:bold;text-shadow:0 0 1.500px rgba(0,0,0,.9);">Page 4</div>
<div class="t" style="left:638.0px;top:201px;font-size:10px;line-height:11px;height:11px;color:#ffffff;transform:scaleX(0.869);font-weight:bold;text-shadow:0 0 1.500px rgba(0,0,0,.9);">Page 5</div>
<div class="t" style="left:778.0px;top:201px;font-size:10px;line-height:11px;height:11px;color:#ffffff;transform:scaleX(0.869);font-weight:bold;text-shadow:0 0 1.500px rgba(0,0,0,.9);">Page 6</div>
<div class="t" style="left:78.0px;top:296px;font-size:10px;line-height:11px;height:11px;color:#ffffff;transform:scaleX(0.869);font-weight:bold;text-shadow:0 0 1.500px rgba(0,0,0,.9);">Page 7</div>
<div class="t" style="left:218.0px;top:296px;font-size:10px;line-height:11px;height:11px;color:#ffffff;transform:scaleX(0.869);font-weight:bold;text-shadow:0 0 1.500px rgba(0,0,0,.9);">Page 8</div>
<div class="t" style="left:358.0px;top:296px;font-size:10px;line-height:11px;height:11px;color:#ffffff;transform:scaleX(0.869);font-weight:bold;text-shadow:0 0 1.500px rgba(0,0,0,.9);">Page 9</div>
<div class="t" style="left:498.0px;top:296px;font-size:10px;line-height:11px;height:11px;color:#ffffff;transform:scaleX(0.889);font-weight:bold;text-shadow:0 0 1.500px rgba(0,0,0,.9);">Page 10</div>
<div class="t" style="left:638.0px;top:296px;font-size:10px;line-height:11px;height:11px;color:#ffffff;transform:scaleX(0.902);font-weight:bold;text-shadow:0 0 1.500px rgba(0,0,0,.9);">Page 11</div>
<div class="t" style="left:778.0px;top:296px;font-size:10px;line-height:11px;height:11px;color:#ffffff;transform:scaleX(0.889);font-weight:bold;text-shadow:0 0 1.500px rgba(0,0,0,.9);">Page 12</div>
<div class="t" style="left:78.0px;top:390px;font-size:10px;line-height:11px;height:11px;color:#ffffff;transform:scaleX(0.889);font-weight:bold;text-shadow:0 0 1.500px rgba(0,0,0,.9);">Page 13</div>
<div class="t" style="left:218.0px;top:390px;font-size:10px;line-height:11px;height:11px;color:#ffffff;transform:scaleX(0.889);font-weight:bold;text-shadow:0 0 1.500px rgba(0,0,0,.9);">Page 14</div>
<div class="t" style="left:358.0px;top:390px;font-size:10px;line-height:11px;height:11px;color:#ffffff;transform:scaleX(0.889);font-weight:bold;text-shadow:0 0 1.500px rgba(0,0,0,.9);">Page 15</div>
<div class="t" style="left:498.0px;top:390px;font-size:10px;line-height:11px;height:11px;color:#ffffff;transform:scaleX(0.889);font-weight:bold;text-shadow:0 0 1.500px rgba(0,0,0,.9);">Page 16</div>
<div class="t" style="left:638.0px;top:390px;font-size:10px;line-height:11px;height:11px;color:#ffffff;transform:scaleX(0.889);font-weight:bold;text-shadow:0 0 1.500px rgba(0,0,0,.9);">Page 17</div>
<div class="t" style="left:778.0px;top:390px;font-size:10px;line-height:11px;height:11px;color:#ffffff;transform:scaleX(0.889);font-weight:bold;text-shadow:0 0 1.500px rgba(0,0,0,.9);">Page 18</div>
<div class="t" style="left:78.0px;top:484px;font-size:10px;line-height:11px;height:11px;color:#ffffff;transform:scaleX(0.889);font-weight:bold;text-shadow:0 0 1.500px rgba(0,0,0,.9);">Page 19</div>
<div class="t" style="left:218.0px;top:484px;font-size:10px;line-height:11px;height:11px;color:#ffffff;transform:scaleX(0.889);font-weight:bold;text-shadow:0 0 1.500px rgba(0,0,0,.9);">Page 20</div>
<svg class="abs art" style="left:76px;top:215.9px" width="125.4" height="84.2" viewBox="0 0 125.4 84.2"><rect x="-.5" y="-.5" width="126.4" height="85.2" fill="#1c1c1c"/><rect width="125.4" height="84.2" fill="#fff"/><path d="M57 47.500 L53.300 55.500 L48.600 54.300" fill="none" stroke="#fbd6a0" stroke-width="2.500" stroke-linecap="round" stroke-linejoin="round"/><path d="M67.500 47.500 L71.800 53 L69 56.800" fill="none" stroke="#fbd6a0" stroke-width="2.500" stroke-linecap="round" stroke-linejoin="round"/><path d="M53 30 L54 40 L66 36 L67 27 Z" fill="#f9c170"/><ellipse cx="62.500" cy="41" rx="12" ry="9.500" fill="#f9c170"/><path d="M68 36 C75 37.500 80 36 83.300 34.300 C82.500 41 78 46 70 48 Z" fill="#f9c170"/><circle cx="60.300" cy="27.200" r="8.700" fill="#f9c170"/><path d="M64 20 C68 22.500 71.500 23 74.500 22.300 C73 25.500 70.500 27.500 67.500 28.500 Z" fill="#f9c170"/><path d="M42 29.300 L52.500 24.500 L53.500 34.500 Z" fill="#f9c170" stroke="#f9c170" stroke-width="1" stroke-linejoin="round"/><circle cx="59.500" cy="27" r="3.900" fill="#fff"/><circle cx="57.900" cy="25.300" r="2.200" fill="#f3a63a"/><rect x="38.70" y="73.50" width="52.30" height="4.00" rx="1.200" fill="#fdfeff" stroke="#5590f2" stroke-width=".75"/><path d="M40.30 75.50 H75.42 M79.02 75.50 H89.40" stroke="#e8c890" stroke-width="1.100" stroke-dasharray="1.500 .9" opacity=".7"/><rect x="76.12" y="73.50" width="1.500" height="4.00" fill="#4a86f0"/></svg>
<svg class="abs art" style="left:216px;top:215.9px" width="125.4" height="84.2" viewBox="0 0 125.4 84.2"><rect x="-.5" y="-.5" width="126.4" height="85.2" fill="#1c1c1c"/><rect width="125.4" height="84.2" fill="#fff"/><path d="M15 46 C13.500 50 10.500 52.300 7.300 53.200" fill="none" stroke="#93d3f5" stroke-width="1.300" stroke-linecap="round"/><path d="M16.900 72.500 L15 44 C13.500 24 20 14.200 36 14.200 C44 14.200 48 15.200 54 14.600 C64 13.600 71.500 17 74 25 C76 31.500 76.500 39 80 43.500 C83 47 76.300 50 76.300 50 L75.800 72.500 L67 72.500 L67 58 L64.800 58 L64.800 72.500 L56 72.500 L56 58 L37.300 58 L37.300 72.500 L28.500 72.500 L28.500 58 L26.300 58 L26.300 72.500 Z" fill="#93d3f5"/><path d="M75 43.500 C80 48.500 92 50.500 101 48 C111 45 115.500 35 112 27.500 C108 19.500 97 17.500 91 23.500 C86.500 28.500 88 36.500 94 38.800 C99.500 40.700 104.500 36.500 103.300 31.500 C102.300 27.800 98.500 26.500 96.500 28.500" fill="none" stroke="#93d3f5" stroke-width="5.900" stroke-linecap="round"/><path d="M73 30 C75 38 77 42 82 45.500 L76 48 Z" fill="#93d3f5"/><circle cx="61.900" cy="28.300" r="1.900" fill="#fff"/><circle cx="69.100" cy="28.300" r="1.900" fill="#fff"/><circle cx="62.400" cy="28.900" r=".7" fill="#4aa0e0"/><circle cx="69.600" cy="28.900" r=".7" fill="#4aa0e0"/><path d="M79.500 24.500 C83 18.500 89 15 95 14" fill="none" stroke="#8ab8e8" stroke-width="1.300" stroke-dasharray=".7 .9"/><path d="M112 21.500 C114.500 24 116 27 116.500 30" fill="none" stroke="#8ab8e8" stroke-width="1.300" stroke-dasharray=".7 .9"/><g fill="none" stroke="#2f5fe0" stroke-width=".8"><rect x="98" y="12.300" width="5.500" height="3" transform="rotate(8 100 13)"/><rect x="104.300" y="14.200" width="5" height="3" transform="rotate(30 106 15)"/><rect x="108.300" y="17.300" width="5" height="3" transform="rotate(40 110 18)"/></g></svg>
<svg class="abs art" style="left:356px;top:215.9px" width="125.4" height="84.2" viewBox="0 0 125.4 84.2"><rect x="-.5" y="-.5" width="126.4" height="85.2" fill="#1c1c1c"/><rect width="125.4" height="84.2" fill="#fff"/><path d="M10.300 65 C10.300 63 13 62.300 16 62.800 C22 63.800 27 63.500 31 62 C33.500 60.500 36 60 39.500 60.300 C42 60.500 43 61.800 45 62 C60 61.300 78 62 90 64 C100 65.500 110 65.300 119.500 64.300 C110 68.500 97 70.500 85 71 C70 72 52 72.300 38 71.300 C27 70.800 18 70 12.500 68.600 C10.500 68 10.300 66.500 10.300 65 Z" fill="#7cc698"/><path d="M11.300 67.300 C20 68.300 32 67.500 41.500 65" fill="none" stroke="#fff" stroke-width="1.300" stroke-linecap="round"/><ellipse cx="37" cy="62" rx="3.200" ry="1.500" fill="#fff"/><ellipse cx="37.200" cy="61.500" rx="2.200" ry=".9" fill="#7cc698"/><path d="M44 66 C46 63.300 50.500 63.800 52.500 67 C54 69.500 56 71.500 59 72.500 L58 76.300 C52 75.800 47 73 44.500 70 C43.500 68.500 43.300 67 44 66 Z" fill="#9bd2a8"/><path d="M69.500 66 C71.500 63.300 76 63.800 78.500 67 C80.500 69.500 83 71.500 86 72.500 L85 76.300 C79 75.800 73 73 70 70 C69 68.500 68.800 67 69.500 66 Z" fill="#9bd2a8"/><rect x="38.70" y="6.30" width="52.30" height="3.70" rx="1.200" fill="#fdfeff" stroke="#5590f2" stroke-width=".75"/><path d="M40.30 8.15 H75.42 M79.02 8.15 H89.40" stroke="#8aa0c0" stroke-width="1.100" stroke-dasharray="1.500 .9" opacity=".7"/><rect x="76.12" y="6.30" width="1.500" height="3.70" fill="#4a86f0"/></svg>
<svg class="abs art" style="left:496px;top:215.9px" width="125.4" height="84.2" viewBox="0 0 125.4 84.2"><rect x="-.5" y="-.5" width="126.4" height="85.2" fill="#1c1c1c"/><rect width="125.4" height="84.2" fill="#fff"/><path d="M79 32 C82 29 83.500 22.500 88 19.300" fill="none" stroke="#1f0f0f" stroke-width="2.300" stroke-linecap="round"/><path d="M47 31 H83.700 L83.200 58 H77.500 V45 H74.400 V58 H68.100 V45 H61.900 V58 H56.300 V45 H52.500 V58 H47.500 Z" fill="#1f0f0f"/><path d="M41.500 22 C41.500 18.500 42.500 15.300 43.800 15.300 C45.300 15.300 47 18.500 48 21 L53 21 C54 18.500 55.500 15.300 57 15.300 C58.500 15.300 59.500 19 59.300 23 L59 33 L50 40 C49 44 45 46 41.500 45.300 C38 44.800 37 42 37.800 39 C38.500 36.500 40.500 33 40.800 29 Z" fill="#1f0f0f"/><circle cx="44.100" cy="29.800" r="2" fill="#e8e0dc"/><circle cx="51.300" cy="29.800" r="2" fill="#e8e0dc"/><circle cx="44.100" cy="29.800" r=".8" fill="#8aa"/><circle cx="51.300" cy="29.800" r=".8" fill="#8aa"/><ellipse cx="40.600" cy="39.700" rx="1.700" ry="1.300" fill="#ddd"/><path d="M38.500 42.800 C40 43.800 43 43.800 45 42.300" fill="none" stroke="#bbb" stroke-width=".6"/><rect x="38.70" y="74.10" width="52.30" height="3.80" rx="1.200" fill="#fdfeff" stroke="#5590f2" stroke-width=".75"/><path d="M40.30 76.00 H75.42 M79.02 76.00 H89.40" stroke="#555" stroke-width="1.100" stroke-dasharray="1.500 .9" opacity=".7"/><rect x="76.12" y="74.10" width="1.500" height="3.80" fill="#4a86f0"/></svg>
<svg class="abs art" style="left:636px;top:215.9px" width="125.4" height="84.2" viewBox="0 0 125.4 84.2"><rect x="-.5" y="-.5" width="126.4" height="85.2" fill="#1c1c1c"/><rect width="125.4" height="84.2" fill="#fff"/><rect x="72" y="27.300" width="11.800" height="19.500" rx="4.500" fill="#fff" stroke="#140c0c" stroke-width="1.500"/><rect x="75.700" y="31.800" width="4.300" height="11.500" rx="2" fill="#fff" stroke="#140c0c" stroke-width="1.300"/><path d="M45.200 34 C45.200 24 51 18.600 60 18.600 C69 18.600 75 24 75 33 V42 C75 51 70 56.500 60 56.500 C50 56.500 45.200 51 45.200 42 Z" fill="#fff" stroke="#140c0c" stroke-width="1.600"/><path d="M46 33.500 C46 29 47.500 24.500 50 22.500 C50.500 25 49.500 29 49 32.500 Z" fill="#140c0c"/><path d="M46 43 C47.500 41 50.500 41.800 52 44.500 C53.500 47.500 56.500 50.500 56 55.300 C50 54.500 46.500 50 46 43 Z" fill="#140c0c"/><path d="M64 40 C66 38.500 69 38 71 37 C73 38 73.500 41 72 44 C70.500 47 67.500 49.500 64.500 49.600 C63 47 63.500 43 64 40 Z" fill="#140c0c"/><ellipse cx="60" cy="29.800" rx="10.600" ry="8.700" fill="#fff" stroke="#140c0c" stroke-width="1.400"/><rect x="38.70" y="73.50" width="52.30" height="3.80" rx="1.200" fill="#fdfeff" stroke="#5590f2" stroke-width=".75"/><path d="M40.30 75.40 H75.42 M79.02 75.40 H89.40" stroke="#777" stroke-width="1.100" stroke-dasharray="1.500 .9" opacity=".7"/><rect x="76.12" y="73.50" width="1.500" height="3.80" fill="#4a86f0"/></svg>
<svg class="abs art" style="left:776px;top:215.9px" width="125.4" height="84.2" viewBox="0 0 125.4 84.2"><rect x="-.5" y="-.5" width="126.4" height="85.2" fill="#1c1c1c"/><rect width="125.4" height="84.2" fill="#fff"/><path d="M31 61 L26 63 C22 62 19.500 63.500 20 65.500 C21 67 25 68 27 69.500 C29 70.500 31 69 31.500 66.500 L35 63 Z" fill="#d6c9bf"/><path d="M58 48.500 C61 47.500 63 49 64 51 L68.500 57 C69.500 59 67.500 60.300 66 58.800 L60 53 Z" fill="#d6c9bf"/><ellipse cx="42.700" cy="19.500" rx="3.500" ry="7.800" transform="rotate(-6 42.700 19.500)" fill="#d6c9bf"/><ellipse cx="51.500" cy="21.500" rx="3.500" ry="8.300" transform="rotate(27 51.500 21.500)" fill="#d6c9bf"/><path d="M22.500 33 C23 28.500 30 26 39 26 C47 26 52 29 51.500 35 C51 40.500 44 42.500 37 42.500 C29 42.500 22 39 22.500 33 Z" fill="#d6c9bf"/><path d="M26.300 57.300 L35 54.500 L57 48.500 C60 52 61.500 56 61 58.800 L51 61 L46.300 57.500 L36.300 66.600 Z" fill="#7b716c"/><path d="M22 47 L28 42.500 L33.500 42.800 L58 36 L58.800 43.500 L56 46.500 L50.500 53.500 L31.500 56 L30 50.500 L25 51.500 Z" fill="#4c8c62"/><circle cx="21.800" cy="44.300" r="2.400" fill="#d6c9bf"/><circle cx="60" cy="38.800" r="2.300" fill="#d6c9bf"/><path d="M36.300 46 L45 45.500 L44 53.500 L40.500 51 L37 53.500 Z" fill="#e3a433"/><circle cx="40.300" cy="48.500" r="1" fill="#3f8a66"/><path d="M33.800 41.800 L37.500 43 L41.500 41 L41.300 45 L37.500 44 L34 45.500 Z" fill="#bb5252"/><circle cx="41.900" cy="31" r="3.500" fill="#fff"/><circle cx="42.200" cy="30.800" r="1.700" fill="#1c1c1c"/><ellipse cx="27" cy="32" rx="2" ry="2.200" fill="#5e5a5a"/><path d="M27 34.200 V36.500 M24.500 37.500 L27 36.500 L29.500 38" fill="none" stroke="#5e5a5a" stroke-width=".6"/><circle cx="16.900" cy="41.600" r="5.300" fill="#f6d08a" stroke="#e2a23c" stroke-width="1"/><path d="M16.900 41.600 L14.500 39.500 M16.900 41.600 L19.800 42.300" stroke="#c8862c" stroke-width=".6"/><circle cx="12.800" cy="34.300" r="1.800" fill="none" stroke="#e2a23c" stroke-width=".8"/><path d="M13.500 32.500 C15 28 21 29 22.500 33.500" fill="none" stroke="#ecc070" stroke-width=".7"/><rect x="69.40" y="51.00" width="52.20" height="3.50" rx="1.200" fill="#fdfeff" stroke="#5590f2" stroke-width=".75"/><path d="M71.00 52.75 H106.05 M109.65 52.75 H120.00" stroke="#d08080" stroke-width="1.100" stroke-dasharray="1.500 .9" opacity=".7"/><rect x="106.75" y="51.00" width="1.500" height="3.50" fill="#4a86f0"/></svg>
<svg class="abs art" style="left:76px;top:310.3px" width="125.4" height="84.2" viewBox="0 0 125.4 84.2"><rect x="-.5" y="-.5" width="126.4" height="85.2" fill="#1c1c1c"/><rect width="125.4" height="84.2" fill="#fff"/><path d="M55.500 64 H58.300 V77 L49.500 78 L55.500 75.500 Z" fill="#6fb0da"/><path d="M67.300 64 H70.200 V77.500 L61 78.300 L67.300 76 Z" fill="#86b060"/><path d="M49 45.500 C58 36 62 20 58.500 4 C63 14 64 32 52 47 Z" fill="#4f9b6e"/><path d="M50 46 C60 38 67 24 68 8.500 C71 22 66 38 52 48 Z" fill="#4a9ad0"/><path d="M50.500 47 C62 42 71 30 75.700 15.300 C76 30 68 44 52 50 Z" fill="#7aa850"/><path d="M41.500 22 L41.200 11.500 L45 21 Z" fill="#4a9ad0"/><path d="M45 22 L49.500 13.300 L48 23 Z" fill="#7aa850"/><path d="M48 23.500 L53.800 17.200 L50.500 26 Z" fill="#4a9ad0"/><path d="M45 25 C42 29 41 33 41 38 C41 49 48.500 59 60 61 C70 62.500 80 61 85.500 55.500 C91.500 49.500 91.500 39 86.500 34.500 C81 29.800 73 32 71 38 C69.500 43.500 73.500 48 78 48 C81 48 82.500 46.500 82.800 45" fill="none" stroke="#8cc4a0" stroke-width="6.800" stroke-linecap="round"/><path d="M45 25 C42 29 41 33 41 38 C41 49 48.500 59 60 61 C70 62.500 80 61 85.500 55.500 C91.500 49.500 91.500 39 86.500 34.500 C81 29.800 73 32 71 38 C69.500 43.500 73.500 48 78 48 C81 48 82.500 46.500 82.800 45" fill="none" stroke="#4f9b6e" stroke-width="5.400" stroke-linecap="round"/><path d="M79 47 C81.500 46.500 84 44.500 85.500 42 C84.500 45.500 82.500 48 80 49 Z" fill="#4a9ad0"/><path d="M24 17.500 C22.500 18 22.800 20.300 24.500 21 L40 28.500 C44 30 48.500 28 48.500 24.500 C48.500 21.500 45 20 41 21.500 Z" fill="#4f9b6e"/><ellipse cx="43.800" cy="24.500" rx="1.700" ry="1.100" fill="#fff"/><circle cx="43.800" cy="24.600" r=".9" fill="#d03030"/><path d="M79.500 26.500 C83 27 87 29 90 32" fill="none" stroke="#a8c8a8" stroke-width="1.200" stroke-dasharray=".7 .9"/><path d="M95.500 45.500 C95 50 93 55 90.500 58" fill="none" stroke="#a8c8a8" stroke-width="1.200" stroke-dasharray=".7 .9"/><g fill="#fff" stroke="#2f5fe0" stroke-width=".8"><rect x="90" y="33.500" width="3" height="5.500" transform="rotate(-25 91.500 36)"/><rect x="93" y="39" width="3" height="5.500" transform="rotate(-10 94.500 42)"/><rect x="81.500" y="59.500" width="9" height="3" transform="rotate(-38 86 61)"/></g></svg>
<svg class="abs art" style="left:216px;top:310.3px" width="125.4" height="84.2" viewBox="0 0 125.4 84.2"><rect x="-.5" y="-.5" width="126.4" height="85.2" fill="#1c1c1c"/><rect width="125.4" height="84.2" fill="#fff"/><path d="M87 42.500 C91 43.500 95 46.500 97 51 L95.500 52 L94.500 50 L93.500 52 C92.500 48.500 90.500 46 87 45 Z" fill="#55709c"/><path d="M45.500 18.500 L51.300 17 L48.500 22 Z" fill="#4a6a9c"/><path d="M48 22.500 L53.800 21.500 L51 26 Z" fill="#b46464"/><path d="M50.500 26.500 L57 25.300 L53.500 30 Z" fill="#4a6a9c"/><path d="M53 30.500 L59.500 29 L56 34 Z" fill="#b46464"/><path d="M51.500 48 L54.800 48 L54.500 70 L52.500 70 Z" fill="#9b7b56"/><path d="M56.500 50 L61 50 L60.500 70 L58 70 Z" fill="#9b7b56"/><path d="M77.300 50 L80.500 50 L80 70 L77.800 70 Z" fill="#9b7b56"/><path d="M82 50 L86.500 48 L85 70 L82.800 70 Z" fill="#9b7b56"/><rect x="52.300" y="69.800" width="3.200" height="3" rx=".8" fill="#4a6a9c"/><rect x="58" y="69.800" width="3.200" height="3" rx=".8" fill="#4c8c40"/><rect x="76.900" y="69.800" width="3.200" height="3" rx=".8" fill="#4a6a9c"/><rect x="82.300" y="69.800" width="3.200" height="3" rx=".8" fill="#4c8c40"/><path d="M42.500 13.300 L45.500 18 C48 24 52 30 56 33 C66 34.500 76 36 83 38.500 C88 40.500 88.500 46 86.500 50 C84 54.500 76 55.500 68 54.500 C62 53.800 57 52 53 51 C49 46 46 38 43.500 31 C36 32 28.500 30 25 26 C22 22.500 22.500 16.500 25.500 14.800 C29 17 36 19.500 41.500 18.500 Z" fill="#9b7b56"/><circle cx="37.500" cy="22.500" r="2.100" fill="#fff"/><circle cx="36.800" cy="21.900" r="1.100" fill="#4c8c40"/><rect x="71.00" y="6.60" width="52.10" height="3.80" rx="1.200" fill="#fdfeff" stroke="#5590f2" stroke-width=".75"/><path d="M72.60 8.50 H107.57 M111.17 8.50 H121.50" stroke="#d0a878" stroke-width="1.100" stroke-dasharray="1.500 .9" opacity=".7"/><rect x="108.27" y="6.60" width="1.500" height="3.80" fill="#4a86f0"/></svg>
<svg class="abs art" style="left:356px;top:310.3px" width="125.4" height="84.2" viewBox="0 0 125.4 84.2"><rect x="-.5" y="-.5" width="126.4" height="85.2" fill="#1c1c1c"/><rect width="125.4" height="84.2" fill="#fff"/><rect x="47.5" y="50" width="2.500" height="14.300" fill="#6b6563"/><rect x="55.6" y="50" width="2.500" height="14.300" fill="#6b6563"/><rect x="67.5" y="50" width="2.500" height="14.300" fill="#6b6563"/><rect x="75.6" y="50" width="2.500" height="14.300" fill="#6b6563"/><circle cx="50" cy="27.3" r="11.2" fill="#dcc5b2"/><circle cx="63.8" cy="24.5" r="11" fill="#dcc5b2"/><circle cx="78.8" cy="28.5" r="11.5" fill="#dcc5b2"/><circle cx="81" cy="42.3" r="10.8" fill="#dcc5b2"/><circle cx="66.3" cy="44.8" r="11.5" fill="#dcc5b2"/><circle cx="48.8" cy="43.5" r="12.2" fill="#dcc5b2"/><circle cx="64" cy="35" r="14" fill="#dcc5b2"/><path d="M34.500 20.300 L45 21 L45 24 L34.500 23.800 Z" fill="#6b6563"/><path d="M63.200 20 L52.500 21 L52.500 24 L63.200 23.500 Z" fill="#6b6563"/><path d="M42 25 C42 20.500 45 19.200 49 19.200 C53 19.200 56.300 20.500 56.300 25 C56.300 33 53 39.200 49 39.200 C45 39.200 42 33 42 25 Z" fill="#6b6563"/><circle cx="44.500" cy="25.400" r="1.900" fill="#fff"/><circle cx="52.900" cy="25.400" r="1.900" fill="#fff"/><circle cx="44.500" cy="25.400" r=".9" fill="#6a9ae0"/><circle cx="52.900" cy="25.400" r=".9" fill="#6a9ae0"/><path d="M18.10 65.500 L20.34 61.500 L21.97 65.500 Z M22.57 65.500 L24.80 61.500 L26.44 65.500 Z M27.04 65.500 L29.28 61.500 L30.91 65.500 Z M31.51 65.500 L33.75 61.500 L35.38 65.500 Z M35.98 65.500 L38.22 61.500 L39.85 65.500 Z M40.45 65.500 L42.69 61.500 L44.32 65.500 Z M44.92 65.500 L47.16 61.500 L48.79 65.500 Z M49.39 65.500 L51.63 61.500 L53.26 65.500 Z M53.86 65.500 L56.10 61.500 L57.73 65.500 Z M58.33 65.500 L60.57 61.500 L62.20 65.500 Z M62.80 65.500 L65.04 61.500 L66.67 65.500 Z M67.27 65.500 L69.51 61.500 L71.14 65.500 Z M71.74 65.500 L73.98 61.500 L75.61 65.500 Z M76.21 65.500 L78.45 61.500 L80.08 65.500 Z M80.68 65.500 L82.92 61.500 L84.55 65.500 Z M85.15 65.500 L87.39 61.500 L89.02 65.500 Z M89.62 65.500 L91.86 61.500 L93.49 65.500 Z M94.09 65.500 L96.33 61.500 L97.96 65.500 Z M98.56 65.500 L100.80 61.500 L102.43 65.500 Z M103.03 65.500 L105.27 61.500 L106.90 65.500 Z " fill="#4c9c3c"/><rect x="60.60" y="68.50" width="52.20" height="3.50" rx="1.200" fill="#fdfeff" stroke="#5590f2" stroke-width=".75"/><path d="M62.20 70.25 H97.24 M100.84 70.25 H111.20" stroke="#a8c070" stroke-width="1.100" stroke-dasharray="1.500 .9" opacity=".7"/><rect x="97.94" y="68.50" width="1.500" height="3.50" fill="#4a86f0"/></svg>
<svg class="abs art" style="left:496px;top:310.3px" width="125.4" height="84.2" viewBox="0 0 125.4 84.2"><rect x="-.5" y="-.5" width="126.4" height="85.2" fill="#1c1c1c"/><rect width="125.4" height="84.2" fill="#fff"/><path d="M69 58.500 C74 62 82 61.500 85 56 C87.500 51 84.500 45.500 79 45 C74.500 44.800 71.500 48.500 72.500 52 C73.300 55 77 56.500 79.500 54.500 C81.500 53 81 50 78.500 49.800" fill="none" stroke="#87654b" stroke-width="2.500" stroke-linecap="round"/><path d="M56 40.500 C47 41 40.500 46 37.500 54" fill="none" stroke="#87654b" stroke-width="5" stroke-linecap="round"/><ellipse cx="37" cy="55.300" rx="3" ry="3.300" fill="#87654b"/><path d="M39.500 55.500 L40.300 58.500" stroke="#87654b" stroke-width="1.300" stroke-linecap="round"/><path d="M68 40 C78 39 85 33 87 24" fill="none" stroke="#87654b" stroke-width="5" stroke-linecap="round"/><circle cx="87.800" cy="22.500" r="3.200" fill="#87654b"/><path d="M85 22 V15" stroke="#87654b" stroke-width="1.800" stroke-linecap="round"/><path d="M53.100 50 H70 V61 C70 62 69.800 62 69.800 63 V71.500 C73 71.500 77 72 78.300 73.800 H65.600 V62 H57.500 V73.800 H45.500 C47 72 50 71.500 53.100 71.500 Z" fill="#87654b"/><rect x="53.100" y="36" width="16.900" height="26" rx="5" fill="#87654b"/><path d="M61.500 11 C67.500 11 70.500 15 71 21 C71.300 24 73 27.500 72.800 31 C72.500 36 68 38 61.500 38 C55 38 50.300 36 50 31 C49.800 27.500 51.700 24 52 21 C52.500 15 55.500 11 61.500 11 Z" fill="#87654b"/><path d="M61.500 14.800 C63 14.800 63.500 16.500 65 17 C68 18 68.500 21.500 68.500 24.500 C68.500 26 70.300 28.500 70.300 30.800 C70.300 34.500 66.500 35.800 61.500 35.800 C56.500 35.800 52.600 34.500 52.600 30.800 C52.600 28.500 54.500 26 54.500 24.500 C54.500 19.500 56.500 14.800 61.500 14.800 Z" fill="#fff"/><path d="M62.500 14 C63.500 16.500 65.500 18 68 18.500 L68 14 Z" fill="#87654b"/><circle cx="57.900" cy="21" r="1.250" fill="#2a4ab0"/><circle cx="65.400" cy="21" r="1.250" fill="#2a4ab0"/><ellipse cx="61.600" cy="24.800" rx="1.500" ry="1.200" fill="#3a8a6a"/><path d="M55 32.900 H68" stroke="#87654b" stroke-width="1.300"/><rect x="71.90" y="5.80" width="52.10" height="3.60" rx="1.200" fill="#fdfeff" stroke="#5590f2" stroke-width=".75"/><path d="M73.50 7.60 H108.47 M112.07 7.60 H122.40" stroke="#c8a070" stroke-width="1.100" stroke-dasharray="1.500 .9" opacity=".7"/><rect x="109.17" y="5.80" width="1.500" height="3.60" fill="#4a86f0"/></svg>
<svg class="abs art" style="left:636px;top:310.3px" width="125.4" height="84.2" viewBox="0 0 125.4 84.2"><rect x="-.5" y="-.5" width="126.4" height="85.2" fill="#1c1c1c"/><rect width="125.4" height="84.2" fill="#fff"/><path d="M83 26.500 C84 23.500 88 22.500 91 24.500 C94 26.500 94.500 31 92.500 34.500 C91.500 36.500 90.500 37.500 89.500 38.500" fill="none" stroke="#140c0c" stroke-width="3.6" stroke-linecap="round"/><path d="M83 26.500 C84 23.500 88 22.500 91 24.500 C94 26.500 94.500 31 92.500 34.500 C91.500 36.500 90.500 37.500 89.500 38.500" fill="none" stroke="#fff" stroke-width="1.4" stroke-linecap="round"/><path d="M48.500 22.700 C56 25 66 27.500 76 26.300 C80 25.800 84 26 86.500 28 C89.500 30.500 90 34 89.300 37.500 C88.500 41.500 87 45 87.600 48.500 C88.500 51 91.500 52.500 91.300 55 C91 58 89.500 61 89.300 64 C89.300 66 87.500 66.700 85.500 66.700 C83.500 66.700 82.300 66 82.500 64.500 C82.700 63.300 84.500 63 85.300 62 C86.300 60 86.300 57 86 55 C84 53 81 51 78.500 48.500 C76 46 73.500 43.500 71.300 41.700 C65 43.500 58 44.500 52.600 45.600 C51.500 51 50.800 57 50.300 63 C51 64.500 51.300 66.600 49 66.700 L45.500 66.700 C43.300 66.700 42.600 65 43.500 63.800 C44.300 62.800 45.800 62.800 46.100 61.500 C46.800 55 47.300 48 46.300 41 C45.500 36.500 43.500 33.500 42.300 30.300 Z" fill="#fff" stroke="#140c0c" stroke-width="1.25" stroke-linejoin="round"/><path d="M57.500 32.500 C62 30 68 27.500 75 26.700 C79 26.300 83 26.300 86 27.800 C88.500 31 88 35.500 86.500 39 C85.500 41 84.500 42.500 83.500 43.500 C82 40.500 80.500 37 78.800 33.600 C76 35 73 36.300 70 37.500 C67 38.600 63.500 39.500 60 40.500 L61.300 36.800 L58.300 36 L59.800 34 Z" fill="#140c0c"/><path d="M23.300 24 C24.500 22.500 27.500 23 30 22.300 C33 21.500 35 19.300 38 18.500 C39.500 18 40.500 18 41 17.600 C40.800 13 41.300 8 43.500 6 C46 7 48 13 48.700 18 C49 20 49.500 21.500 50 22.800 C49.500 25.500 48.500 28 46.500 29.500 C44.500 31 42 31.300 39.500 31.300 C36 31.500 33 32.300 29.500 32 C26.500 31.800 23.500 30.500 23 28 C22.700 26.500 22.700 25 23.300 24 Z" fill="#d9b9a2" stroke="#140c0c" stroke-width="1.25" stroke-linejoin="round"/><circle cx="38.100" cy="22.200" r="1.500" fill="#140c0c"/><ellipse cx="24.300" cy="24.800" rx="1.700" ry="1.400" fill="#140c0c"/><path d="M41.800 17.800 C41.800 13 42.500 9.500 43.700 8.300 C45 10.500 45.500 15 44.500 19.500" fill="none" stroke="#140c0c" stroke-width=".8"/><path d="M36 30 C38 30 39.500 29.300 40.500 28" fill="none" stroke="#140c0c" stroke-width=".8"/><path d="M45.500 21 C46.500 23.500 46 26 44.500 28.500 L48 25.500 L48.800 22.500 Z" fill="#140c0c"/><rect x="38.70" y="74.10" width="52.30" height="3.80" rx="1.200" fill="#fdfeff" stroke="#5590f2" stroke-width=".75"/><path d="M40.30 76.00 H75.42 M79.02 76.00 H89.40" stroke="#555" stroke-width="1.100" stroke-dasharray="1.500 .9" opacity=".7"/><rect x="76.12" y="74.10" width="1.500" height="3.80" fill="#4a86f0"/></svg>
<svg class="abs art" style="left:776px;top:310.3px" width="125.4" height="84.2" viewBox="0 0 125.4 84.2"><rect x="-.5" y="-.5" width="126.4" height="85.2" fill="#1c1c1c"/><rect width="125.4" height="84.2" fill="#fff"/><path d="M48.500 19.500 L48 12.500 L52.500 16.500 L57.500 9 L62.500 16.500 L68.200 12.800 L66.500 21 Z" fill="#c9594b"/><path d="M43.100 36 L47.500 33 L48 39 L43 39.300 Z" fill="#c9594b"/><path d="M36.300 28 L48.500 21.300 L47 33.800 Z" fill="#e9b690" stroke="#e9b690" stroke-width=".8" stroke-linejoin="round"/><path d="M54 56 H56.900 V61 L56.900 64 H50 C48.300 64 48.300 61.200 50 61.200 H54 Z" fill="#e9b998"/><path d="M64.100 56 H67 V64 H60 C58.300 64 58.300 61.200 60 61.200 H64.100 Z" fill="#e9b998"/><path d="M47.500 27.300 C47.500 20.500 52 16.600 58 16.600 C64.500 16.600 68.800 21 68.800 27.500 V39.500 H82.500 C85 39.500 86 41.500 84.500 43.500 C79 51.500 71 57.300 61 57.300 C52.500 57.300 47.500 52 47.500 45 Z" fill="#e7d0c5"/><circle cx="57.500" cy="25.600" r="4.400" fill="#fff"/><circle cx="57.500" cy="25.900" r="2.200" fill="#b48462"/><path d="M54 21.500 L53 19.800 M55.800 20.800 L55.300 19 M57.700 20.600 V18.800 M59.600 20.900 L60.200 19.200 M61.300 21.800 L62.400 20.300" stroke="#fff" stroke-width=".8" stroke-linecap="round"/><rect x="38.70" y="74.10" width="52.30" height="3.80" rx="1.200" fill="#fdfeff" stroke="#5590f2" stroke-width=".75"/><path d="M40.30 76.00 H75.42 M79.02 76.00 H89.40" stroke="#c8a8a0" stroke-width="1.100" stroke-dasharray="1.500 .9" opacity=".7"/><rect x="76.12" y="74.10" width="1.500" height="3.80" fill="#4a86f0"/></svg>
<svg class="abs art" style="left:76px;top:404.7px" width="125.4" height="84.2" viewBox="0 0 125.4 84.2"><rect x="-.5" y="-.5" width="126.4" height="85.2" fill="#1c1c1c"/><rect width="125.4" height="84.2" fill="#fff"/><defs><clipPath id="chz"><path d="M41 15 C54 9 72 9 85.500 15 C88.500 16.500 89 19 87.500 21 L83.500 22.500 C80.500 26 77.500 31 78.100 36.900 L66.800 65.500 C65.300 69 61.500 69 60.300 66 L58.750 60 C59.500 54 57 48 52 45.600 L38.500 21.500 C37.300 19 38 16.500 41 15 Z"/></clipPath></defs><g clip-path="url(#chz)"><rect x="30" y="5" width="70" height="70" fill="#f9bd3b"/><circle cx="56.300" cy="30.600" r="7" fill="#fbda8f"/><circle cx="78" cy="27.300" r="8.600" fill="#fbda8f"/><circle cx="56.500" cy="52" r="7.800" fill="#fbda8f"/></g><rect x="39.10" y="73.50" width="51.90" height="4.00" rx="1.200" fill="#fdfeff" stroke="#5590f2" stroke-width=".75"/><path d="M40.70 75.50 H75.53 M79.13 75.50 H89.40" stroke="#e8d070" stroke-width="1.100" stroke-dasharray="1.500 .9" opacity=".7"/><rect x="76.23" y="73.50" width="1.500" height="4.00" fill="#4a86f0"/></svg>
<svg class="abs art" style="left:216px;top:404.7px" width="125.4" height="84.2" viewBox="0 0 125.4 84.2"><rect x="-.5" y="-.5" width="126.4" height="85.2" fill="#1c1c1c"/><rect width="125.4" height="84.2" fill="#fff"/><g transform="translate(0 -1)"><path d="M83 26.500 C84 23.500 88 22.500 91 24.500 C94 26.500 94.500 31 92.500 34.500 C91.500 36.500 90.500 37.500 89.500 38.500" fill="none" stroke="#ebebeb" stroke-width="3.4" stroke-linecap="round"/><path d="M48.500 22.700 C56 25 66 27.500 76 26.300 C80 25.800 84 26 86.500 28 C89.500 30.500 90 34 89.300 37.500 C88.500 41.500 87 45 87.600 48.500 C88.500 51 91.500 52.500 91.300 55 C91 58 89.500 61 89.300 64 C89.300 66 87.500 66.700 85.500 66.700 C83.500 66.700 82.300 66 82.500 64.500 C82.700 63.300 84.500 63 85.300 62 C86.300 60 86.300 57 86 55 C84 53 81 51 78.500 48.500 C76 46 73.500 43.500 71.300 41.700 C65 43.500 58 44.500 52.600 45.600 C51.500 51 50.800 57 50.300 63 C51 64.500 51.300 66.600 49 66.700 L45.500 66.700 C43.300 66.700 42.600 65 43.500 63.800 C44.300 62.800 45.800 62.800 46.100 61.500 C46.800 55 47.300 48 46.300 41 C45.500 36.500 43.500 33.500 42.300 30.300 Z" fill="#ebebeb" /><path d="M57.500 32.500 C62 30 68 27.500 75 26.700 C79 26.300 83 26.300 86 27.800 C88.500 31 88 35.500 86.500 39 C85.500 41 84.500 42.500 83.500 43.500 C82 40.500 80.500 37 78.800 33.600 C76 35 73 36.300 70 37.500 C67 38.600 63.500 39.500 60 40.500 L61.300 36.800 L58.300 36 L59.800 34 Z" fill="#6f6f6f"/><path d="M47 21 L50.500 23.500 L45.500 29.500 L44.500 26 Z" fill="#575757"/><path d="M23.300 24 C24.500 22.500 27.500 23 30 22.300 C33 21.500 35 19.300 38 18.500 C39.500 18 40.500 18 41 17.600 C40.800 13 41.300 8 43.500 6 C46 7 48 13 48.700 18 C49 20 49.500 21.500 50 22.800 C49.500 25.500 48.500 28 46.500 29.500 C44.500 31 42 31.300 39.500 31.300 C36 31.500 33 32.300 29.500 32 C26.500 31.800 23.500 30.500 23 28 C22.700 26.500 22.700 25 23.300 24 Z" fill="#f1d5bd" /><circle cx="38.100" cy="22.200" r="1.500" fill="#4a5058"/><ellipse cx="24.300" cy="24.800" rx="1.600" ry="1.500" fill="#3c3c44"/><path d="M36.500 29.800 C38 29.800 39.300 29 40 27.800" fill="none" stroke="#4a5058" stroke-width="1"/><path d="M40.500 17 L43 14 M41.300 13.500 L43.800 10.500 M43.800 18.500 L45.800 15.500" stroke="#4a5058" stroke-width="1.200"/><path d="M83 27 L91.500 25.800" stroke="#6f6f6f" stroke-width="1" stroke-linecap="round"/></g><rect x="38.70" y="73.50" width="52.30" height="4.00" rx="1.200" fill="#fdfeff" stroke="#5590f2" stroke-width=".75"/><path d="M40.30 75.50 H75.42 M79.02 75.50 H89.40" stroke="#555" stroke-width="1.100" stroke-dasharray="1.500 .9" opacity=".7"/><rect x="76.12" y="73.50" width="1.500" height="4.00" fill="#4a86f0"/></svg>
<svg class="abs art" style="left:356px;top:404.7px" width="125.4" height="84.2" viewBox="0 0 125.4 84.2"><rect x="-.5" y="-.5" width="126.4" height="85.2" fill="#1c1c1c"/><rect width="125.4" height="84.2" fill="#fff"/><g transform="translate(0 -1)"><path d="M83 26.500 C84 23.500 88 22.500 91 24.500 C94 26.500 94.500 31 92.500 34.500 C91.500 36.500 90.500 37.500 89.500 38.500" fill="none" stroke="#e6e6e6" stroke-width="3.4" stroke-linecap="round"/><path d="M48.500 22.700 C56 25 66 27.500 76 26.300 C80 25.800 84 26 86.500 28 C89.500 30.500 90 34 89.300 37.500 C88.500 41.500 87 45 87.600 48.500 C88.500 51 91.500 52.500 91.300 55 C91 58 89.500 61 89.300 64 C89.300 66 87.500 66.700 85.500 66.700 C83.500 66.700 82.300 66 82.500 64.500 C82.700 63.300 84.500 63 85.300 62 C86.300 60 86.300 57 86 55 C84 53 81 51 78.500 48.500 C76 46 73.500 43.500 71.300 41.700 C65 43.500 58 44.500 52.600 45.600 C51.500 51 50.800 57 50.300 63 C51 64.500 51.300 66.600 49 66.700 L45.500 66.700 C43.300 66.700 42.600 65 43.500 63.800 C44.300 62.800 45.800 62.800 46.100 61.500 C46.800 55 47.300 48 46.300 41 C45.500 36.500 43.500 33.500 42.300 30.300 Z" fill="#e9e9e9" /><defs><clipPath id="tg"><path d="M42.300 30.500 L47 23 C48 19.500 53 19.500 54.500 23.500 C60 25.500 68 27 76 26.300 C80 25.800 84 26 86.500 28 C89.500 30.500 90 34 89.300 37.500 C88.500 41.500 87 45 87.600 48.500 C88.500 51 91.500 52.500 91.300 55 C91 57 90 59 89.700 60.800 L85.600 60.800 C86.300 59 86.300 57 86 55 C84 53 81 51 78.500 48.500 C76 46 73.500 43.500 71.300 41.700 C65 43.500 58 44.500 52.600 45.600 C51.500 50 51 55 50.500 60.300 L46.200 60.300 C46.800 55 47.300 48 46.300 41 C45.500 36.500 43.500 33.500 42.300 30.500 Z"/></clipPath></defs><g clip-path="url(#tg)"><rect x="40" y="18" width="55" height="45" fill="#e19a60"/><path d="M53 44.800 C58 46.500 66 45.500 71.500 41.300 L70 40.500 C64 42.500 58 43.500 52.800 43.500 Z" fill="#f1d3bb"/><g fill="#5d4b3a"><path d="M47 28 L55 21.500 L55.500 25 L48.500 29.800 Z"/><path d="M43 32 L50 30 L45.500 35.500 Z"/><path d="M57.500 26 L61.500 27 L55 40 Z"/><path d="M65.500 27.500 L70 27.800 L62.500 39.500 Z"/><path d="M73 27.500 L77.500 27 L70.500 38.500 Z"/><path d="M80.500 28 L85 30.500 L77.500 37 Z"/><path d="M88.500 36 L88.500 40.500 L80.500 42.500 Z"/><path d="M88 44 L87.500 47.500 L81 47 Z"/><path d="M71.500 42 L76.500 41.500 L73.500 45.500 Z"/><path d="M76 47.500 L80 46 L77.500 49.500 Z"/><path d="M90.500 52 L91.500 55 L85.500 54 Z"/><path d="M46.300 39 L52.500 41.500 L46.800 42 Z"/><path d="M46.800 46.500 L51.500 49 L46.800 49.500 Z"/><path d="M46.600 53.500 L50.500 55.500 L46.400 56.500 Z"/></g></g><path d="M23.300 24 C24.500 22.500 27.500 23 30 22.300 C33 21.500 35 19.300 38 18.500 C39.500 18 40.500 18 41 17.600 C40.800 13 41.300 8 43.500 6 C46 7 48 13 48.700 18 C49 20 49.500 21.500 50 22.800 C49.500 25.500 48.500 28 46.500 29.500 C44.500 31 42 31.300 39.500 31.300 C36 31.500 33 32.300 29.500 32 C26.500 31.800 23.500 30.500 23 28 C22.700 26.500 22.700 25 23.300 24 Z" fill="#f1d7c2" /><circle cx="38.100" cy="22.200" r="1.500" fill="#4a5058"/><ellipse cx="24.300" cy="24.800" rx="1.600" ry="1.500" fill="#3c3c44"/><path d="M36.500 29.800 C38 29.800 39.300 29 40 27.800" fill="none" stroke="#4a5058" stroke-width="1"/><path d="M40.500 17 L43 14 M41.300 13.500 L43.800 10.500 M43.800 18.500 L45.800 15.500" stroke="#4a5058" stroke-width="1.200"/><path d="M84 27.500 L91.500 26" stroke="#6f6f6f" stroke-width="1" stroke-linecap="round"/></g><rect x="38.70" y="73.50" width="52.30" height="4.00" rx="1.200" fill="#fdfeff" stroke="#5590f2" stroke-width=".75"/><path d="M40.30 75.50 H75.42 M79.02 75.50 H89.40" stroke="#555" stroke-width="1.100" stroke-dasharray="1.500 .9" opacity=".7"/><rect x="76.12" y="73.50" width="1.500" height="4.00" fill="#4a86f0"/></svg>
<svg class="abs art" style="left:496px;top:404.7px" width="125.4" height="84.2" viewBox="0 0 125.4 84.2"><rect x="-.5" y="-.5" width="126.4" height="85.2" fill="#1c1c1c"/><rect width="125.4" height="84.2" fill="#fff"/><path d="M51 47 L75 47 L76.300 64.500 C76.300 68.500 49.400 68.500 49.400 64.500 Z" fill="#6b6b6b"/><path d="M50.700 52.500 C56 55.800 70 55.800 75.300 52.500 L75.700 58.500 C70 61.800 56 61.800 50.200 58.500 Z" fill="#e14b29"/><ellipse cx="62.900" cy="45" rx="18.800" ry="8.200" fill="#6b6b6b"/><ellipse cx="62.900" cy="45.500" rx="14" ry="5" fill="#565656"/><path d="M58 21 C54.500 16.500 52 10 52.800 6 C53.200 4.500 55 4.500 56.300 6 C59 9.500 61 14 62 19.500 Z" fill="#e7d9d7"/><path d="M67.300 21 C70.800 16.500 73.300 10 72.500 6 C72.100 4.500 70.300 4.500 69 6 C66.300 9.500 64.300 14 63.300 19.500 Z" fill="#e7d9d7"/><path d="M57.500 34 H68 C69.500 39 70.500 45 70 50.300 L65.300 50.300 L65.300 48.500 L60.500 48.500 L60.500 50.300 L55.700 50.300 C55.300 45 56 39 57.500 34 Z" fill="#e7d9d7"/><ellipse cx="62.700" cy="27" rx="9.400" ry="10.300" fill="#e7d9d7"/><circle cx="58.800" cy="21.900" r="1.800" fill="#fff"/><circle cx="66.600" cy="21.900" r="1.800" fill="#fff"/><circle cx="58.900" cy="22" r=".8" fill="#7a4a4a"/><circle cx="66.500" cy="22" r=".8" fill="#7a4a4a"/><ellipse cx="62.700" cy="26" rx="1.400" ry="1.200" fill="#7a3a42"/><path d="M62.700 27 V29.300 M57 29.300 C59 31 61.500 30.800 62.700 29.300 C64 30.800 66.500 31 68.500 29.300" fill="none" stroke="#8a4a52" stroke-width=".7"/><rect x="38.70" y="73.50" width="52.30" height="4.00" rx="1.200" fill="#fdfeff" stroke="#5590f2" stroke-width=".75"/><path d="M40.30 75.50 H75.42 M79.02 75.50 H89.40" stroke="#555" stroke-width="1.100" stroke-dasharray="1.500 .9" opacity=".7"/><rect x="76.12" y="73.50" width="1.500" height="4.00" fill="#4a86f0"/></svg>
<svg class="abs art" style="left:636px;top:404.7px" width="125.4" height="84.2" viewBox="0 0 125.4 84.2"><rect x="-.5" y="-.5" width="126.4" height="85.2" fill="#1c1c1c"/><rect width="125.4" height="84.2" fill="#fff"/><path d="M38.5 61 H41.3 V71.500 L32.5 72 L36.5 70.500 L32.0 69 L38.5 68.500 Z" fill="#dfa3ab"/><path d="M48.5 61 H51.3 V71.500 L42.5 72 L46.5 70.500 L42.0 69 L48.5 68.500 Z" fill="#c15b74"/><path d="M78.5 61 H81.3 V71.500 L72.5 72 L76.5 70.500 L72.0 69 L78.5 68.500 Z" fill="#dfa3ab"/><path d="M89.5 61 H92.3 V71.500 L83.5 72 L87.5 70.500 L83.0 69 L89.5 68.500 Z" fill="#c15b74"/><path d="M38.500 50 C47 40 53 22 49.500 4 C56 18 55.500 38 41.500 51.500 Z" fill="#c15b74"/><path d="M40 50.500 C50 43 57.500 28 59.800 9.500 C63 26 56 43 42 52 Z" fill="#e9a6a0"/><path d="M40 52 C52 47 63 34 69.500 17 C69 34 59 48 42 54 Z" fill="#cf7c8c"/><path d="M33.500 33 L31.800 24.300 L36.500 32.500 Z" fill="#e9a6a0"/><path d="M36.500 33.500 L40.200 25.500 L39.500 35.500 Z" fill="#c15b74"/><path d="M40 34 L44 29.300 L41.500 37 Z" fill="#e9a6a0"/><path d="M37 38 C35 43 33.500 49 34 54 C35 59 42 59.500 48 58.500 C54 57.500 60 54 66 54 C72 54 80 58.500 88 58 C98 57 104.500 48 104 38.500 C103.500 28 96 22 88 22 C78 22 71.500 29 71.500 36 C71.500 43.500 77 48.300 82.500 48 C88 47.500 91 43.500 90.300 39.500 C89.500 35.500 86 33.500 83 34 C81 34.500 79 36 78.300 37.800" fill="none" stroke="#dfa3ab" stroke-width="6.800" stroke-linecap="round" transform="translate(.5 .9)"/><path d="M37 38 C35 43 33.500 49 34 54 C35 59 42 59.500 48 58.500 C54 57.500 60 54 66 54 C72 54 80 58.500 88 58 C98 57 104.500 48 104 38.500 C103.500 28 96 22 88 22 C78 22 71.500 29 71.500 36 C71.500 43.500 77 48.300 82.500 48 C88 47.500 91 43.500 90.300 39.500 C89.500 35.500 86 33.500 83 34 C81 34.500 79 36 78.300 37.800" fill="none" stroke="#c15b74" stroke-width="5" stroke-linecap="round"/><path d="M79 38 L83 35.500 L81 39.500 Z" fill="#e9a6a0"/><path d="M16 29.300 C14.500 30 14.800 32.300 16.500 33 L32 40 C36 41.500 40 40 40.300 37 C40.500 34 37.500 32.500 33.500 33.500 Z" fill="#c15b74"/><path d="M32.300 35.500 L37 35 L34.500 37.500 Z" fill="#fff"/><circle cx="34.800" cy="36" r=".7" fill="#d03050"/><rect x="71.90" y="5.30" width="52.10" height="3.70" rx="1.200" fill="#fdfeff" stroke="#5590f2" stroke-width=".75"/><path d="M73.50 7.15 H108.47 M112.07 7.15 H122.40" stroke="#c08090" stroke-width="1.100" stroke-dasharray="1.500 .9" opacity=".7"/><rect x="109.17" y="5.30" width="1.500" height="3.70" fill="#4a86f0"/></svg>
<svg class="abs art" style="left:776px;top:404.7px" width="125.4" height="84.2" viewBox="0 0 125.4 84.2"><rect x="-.5" y="-.5" width="126.4" height="85.2" fill="#1c1c1c"/><rect width="125.4" height="84.2" fill="#fff"/></svg>
<svg class="abs art" style="left:76px;top:499.1px" width="125.4" height="84.2" viewBox="0 0 125.4 84.2"><rect x="-.5" y="-.5" width="126.4" height="85.2" fill="#1c1c1c"/><rect width="125.4" height="84.2" fill="#fff"/></svg>
<svg class="abs art" style="left:216px;top:499.1px" width="125.4" height="84.2" viewBox="0 0 125.4 84.2"><rect x="-.5" y="-.5" width="126.4" height="85.2" fill="#1c1c1c"/><rect width="125.4" height="84.2" fill="#fff"/></svg>
</section>
<section id="right">
<div class="abs" style="left:933px;top:102.5px;width:213px;height:595.0px;background:#353535;"></div>
<div class="abs" style="left:933px;top:102.5px;width:1.3999999999999773px;height:595.0px;background:#1a1a1a;"></div>
<div class="abs" style="left:934.4px;top:102.5px;width:211.60000000000002px;height:22.5px;background:#232323;"></div>
<div class="abs" style="left:940.3px;top:107px;width:3.5px;height:13.799999999999997px;background:#4b4b4b;border-radius:1.7px;"></div>
<div class="t" style="left:953.8px;top:108px;font-size:9.5px;line-height:11px;height:11px;color:#cdcdcd;transform:scaleX(0.883);text-shadow:.25px 0 0 #cdcdcd;">Colour</div>
<div class="abs" style="left:984px;top:106.3px;width:47.299999999999955px;height:15.200000000000003px;background:#454545;border-radius:4px;"></div>
<div class="t" style="left:989.0px;top:108px;font-size:9.5px;line-height:11px;height:11px;color:#fff;transform:scaleX(0.849);font-weight:bold;">Swatches</div>
<div class="t" style="left:1036.0px;top:108px;font-size:9.5px;line-height:11px;height:11px;color:#cdcdcd;transform:scaleX(0.900);text-shadow:.25px 0 0 #cdcdcd;">Stroke</div>
<div class="t" style="left:1071.0px;top:108px;font-size:9.5px;line-height:11px;height:11px;color:#cdcdcd;transform:scaleX(0.898);text-shadow:.25px 0 0 #cdcdcd;">Appearance</div>
<div class="abs" style="left:1125.5px;top:107.7px;width:13.200000000000045px;height:12.700000000000003px;border-radius:2.8px;border:1px solid #6e6e6e;"></div><svg class="abs" style="left:1128.1px;top:110.55000000000001px;" width="8" height="7" viewBox="0 0 8 7"><path d="M1.200 1.300 L4 5.800 L6.800 1.300" fill="none" stroke="#f0f0f0" stroke-width="1.400" stroke-linecap="round" stroke-linejoin="round"/></svg>
<svg class="abs" style="left:934px;top:126px;" width="80" height="45" viewBox="0 0 80 45"><circle cx="18.800" cy="16.400" r="10.800" fill="#050505" stroke="#4a4a4a" stroke-width="1"/><circle cx="18.800" cy="16.400" r="4.800" fill="#353535" stroke="#4c4c4c" stroke-width=".8"/><circle cx="26.750" cy="25.100" r="10.300" fill="#f1efef" stroke="#2a2a2a" stroke-width="1.200"/><circle cx="11.200" cy="33" r="4.300" fill="#f4f4f4" stroke="#2a2a2a" stroke-width=".8"/><path d="M8.300 35.900 L14.100 30.100" stroke="#e02020" stroke-width="1.100"/><path d="M31 7 C34 7.500 37 10.500 38 13.500 M30.300 9.300 L30.600 6.600 L33.300 7 M39.500 11 L38.300 13.900 L35.800 12.600" fill="none" stroke="#8a8a8a" stroke-width="1"/><g transform="translate(52.500 13.500) rotate(45)"><path d="M-1.800 -1.500 V8.300 a1.800 1.800 0 0 0 3.600 0 V-1.500" fill="none" stroke="#e8e8e8" stroke-width="1.200"/><path d="M0 2 V8" stroke="#e8e8e8" stroke-width=".9"/><path d="M-4 -1.500 H4" stroke="#e8e8e8" stroke-width="1.800" stroke-linecap="round"/><path d="M-2.500 -2.500 V-7 a2.500 2.900 0 0 1 5 0 V-2.500 Z" fill="none" stroke="#e8e8e8" stroke-width="1.200"/></g><circle cx="67.200" cy="12.900" r="5.200" fill="#b85b59" stroke="#262626" stroke-width="1"/></svg>
<div class="t" style="left:1052.3px;top:141px;font-size:9.5px;line-height:11px;height:11px;color:#f4f4f4;transform:scaleX(0.921);text-shadow:.3px 0 0 #f4f4f4;">Opacity:</div>
<div class="abs" style="left:1092px;top:138.3px;width:35.799999999999955px;height:16.69999999999999px;background:#252525;border-radius:3px 0 0 3px;"></div>
<div class="abs" style="left:1129.3px;top:138.3px;width:9.400000000000091px;height:16.69999999999999px;background:#252525;border-radius:0 3px 3px 0;"></div>
<div class="t" style="left:1093.5px;top:141px;font-size:9.5px;line-height:11px;height:11px;color:#fff;transform:scaleX(0.872);text-shadow:.3px 0 0 #fff;">100 %</div>
<svg class="abs" style="left:1131.9px;top:145.3px;" width="4.2" height="3.2" viewBox="0 0 4.2 3.2"><path d="M.3 .4 L2.1 2.700 L3.9000000000000004 .4" fill="none" stroke="#e6e6e6" stroke-width="1.200"/></svg>
<div class="t" style="left:940.3px;top:177px;font-size:9.5px;line-height:11px;height:11px;color:#f4f4f4;transform:scaleX(0.883);text-shadow:.3px 0 0 #f4f4f4;">Recent:</div>
<div class="abs" style="left:973px;top:177px;width:104.5px;height:10.599999999999994px;background:#2b2b2b;border-radius:1px;"></div>
<div class="abs" style="left:940.4px;top:194px;width:111.10000000000002px;height:15.800000000000011px;background:#4c4c4c;border-radius:4px;"></div>
<div class="abs" style="left:946px;top:195.5px;width:13.200000000000045px;height:12.900000000000006px;border-radius:1.5px;border:1px solid #7c7c7c;"></div>
<svg class="abs" style="left:946px;top:195.5px;" width="13.2" height="12.9" viewBox="0 0 13.2 12.9"><path d="M10.44 5.79 L10.44 7.11 L9.37 7.25 L9.13 7.85 L9.78 8.70 L8.85 9.63 L8.00 8.98 L7.40 9.22 L7.26 10.29 L5.94 10.29 L5.80 9.22 L5.20 8.98 L4.35 9.63 L3.42 8.70 L4.07 7.85 L3.83 7.25 L2.76 7.11 L2.76 5.79 L3.83 5.65 L4.07 5.05 L3.42 4.20 L4.35 3.27 L5.20 3.92 L5.80 3.68 L5.94 2.61 L7.26 2.61 L7.40 3.68 L8.00 3.92 L8.85 3.27 L9.78 4.20 L9.13 5.05 L9.37 5.65Z" fill="#8e8e8e" stroke="#8e8e8e" stroke-width=".6" stroke-linejoin="round"/><circle cx="6.6" cy="6.45" r="1.5" fill="#4c4c4c"/></svg>
<div class="t" style="left:963.0px;top:196px;font-size:9.5px;line-height:11px;height:11px;color:#fff;transform:scaleX(0.822);font-weight:bold;">Colours</div>
<svg class="abs" style="left:1042.5px;top:197px;" width="5" height="10" viewBox="0 0 5 10"><path d="M.5 3.300 L2.500 1.200 L4.500 3.300 M.5 6.700 L2.500 8.800 L4.500 6.700" fill="none" stroke="#d0d0d0" stroke-width="1.100"/></svg>
<svg class="abs" style="left:1058px;top:195.8px;" width="13" height="12" viewBox="0 0 13 12"><g fill="#e4e4e4"><rect x="0" y=".8" width="4.600" height="4.600" rx="1"/><rect x="0" y="7" width="4.600" height="4.600" rx="1"/><rect x="6.200" y="7" width="4.600" height="4.600" rx="1"/></g><path d="M6.500 2.800 H11.300 M8.900 .4 V5.200" stroke="#e4e4e4" stroke-width="1.100"/></svg>
<svg class="abs" style="left:1096.4px;top:198px;" width="43" height="10" viewBox="0 0 43 10"><rect x="0" y="0" width="10.600" height="9.800" fill="#fff"/><path d="M.5 9.300 L10.100 .5" stroke="#e83030" stroke-width=".9"/><rect x="12" y="0" width="8" height="9.800" fill="#2a1b19"/><rect x="21.100" y="0" width="9.900" height="9.800" fill="#a6a6a6"/><rect x="31.400" y="0" width="11.200" height="9.800" fill="#fff"/></svg>
<svg class="abs" style="left:941.7px;top:214.8px;" width="187.7" height="67.5" viewBox="0 0 187.7 67.5"><rect x="-.5" y="-.5" width="188.70" height="68" fill="#222"/><rect x="0.00" y="0.00" width="9.83" height="9.90" fill="#b0687a"/><rect x="10.43" y="0.00" width="9.83" height="9.90" fill="#b0687a"/><rect x="20.86" y="0.00" width="9.83" height="9.90" fill="#b0687a"/><rect x="31.28" y="0.00" width="9.83" height="9.90" fill="#e82020"/><rect x="41.71" y="0.00" width="9.83" height="9.90" fill="#f07020"/><rect x="52.14" y="0.00" width="9.83" height="9.90" fill="#f8a818"/><rect x="62.57" y="0.00" width="9.83" height="9.90" fill="#e8e030"/><rect x="72.99" y="0.00" width="9.83" height="9.90" fill="#a8d030"/><rect x="83.42" y="0.00" width="9.83" height="9.90" fill="#70c838"/><rect x="93.85" y="0.00" width="9.83" height="9.90" fill="#58c040"/><rect x="104.28" y="0.00" width="9.83" height="9.90" fill="#68c870"/><rect x="114.71" y="0.00" width="9.83" height="9.90" fill="#68c8b8"/><rect x="125.13" y="0.00" width="9.83" height="9.90" fill="#40c0e8"/><rect x="135.56" y="0.00" width="9.83" height="9.90" fill="#3078c8"/><rect x="145.99" y="0.00" width="9.83" height="9.90" fill="#2850b0"/><rect x="156.42" y="0.00" width="9.83" height="9.90" fill="#3840a8"/><rect x="166.84" y="0.00" width="9.83" height="9.90" fill="#6840a8"/><rect x="177.27" y="0.00" width="9.83" height="9.90" fill="#a848a8"/><rect x="0.00" y="10.50" width="9.83" height="9.90" fill="#e048a8"/><rect x="10.43" y="10.50" width="9.83" height="9.90" fill="#e81878"/><rect x="20.86" y="10.50" width="9.83" height="9.90" fill="#e82020"/><rect x="31.28" y="10.50" width="9.83" height="9.90" fill="#f07020"/><rect x="41.71" y="10.50" width="9.83" height="9.90" fill="#f8a818"/><rect x="52.14" y="10.50" width="9.83" height="9.90" fill="#e8e030"/><rect x="62.57" y="10.50" width="9.83" height="9.90" fill="#a8d030"/><rect x="72.99" y="10.50" width="9.83" height="9.90" fill="#70c838"/><rect x="83.42" y="10.50" width="9.83" height="9.90" fill="#58c040"/><rect x="93.85" y="10.50" width="9.83" height="9.90" fill="#68c870"/><rect x="104.28" y="10.50" width="9.83" height="9.90" fill="#68c8b8"/><rect x="114.71" y="10.50" width="9.83" height="9.90" fill="#40c0e8"/><rect x="125.13" y="10.50" width="9.83" height="9.90" fill="#3078c8"/><rect x="135.56" y="10.50" width="9.83" height="9.90" fill="#2850b0"/><rect x="145.99" y="10.50" width="9.83" height="9.90" fill="#3840a8"/><rect x="156.42" y="10.50" width="9.83" height="9.90" fill="#6840a8"/><rect x="166.84" y="10.50" width="9.83" height="9.90" fill="#a848a8"/><rect x="177.27" y="10.50" width="9.83" height="9.90" fill="#e048a8"/><rect x="0.00" y="21.00" width="9.83" height="9.90" fill="#e61c79"/><rect x="10.43" y="21.00" width="9.83" height="9.90" fill="#e62424"/><rect x="20.86" y="21.00" width="9.83" height="9.90" fill="#ee7124"/><rect x="31.28" y="21.00" width="9.83" height="9.90" fill="#f6a81c"/><rect x="41.71" y="21.00" width="9.83" height="9.90" fill="#e6de33"/><rect x="52.14" y="21.00" width="9.83" height="9.90" fill="#a7ce33"/><rect x="62.57" y="21.00" width="9.83" height="9.90" fill="#71c63a"/><rect x="72.99" y="21.00" width="9.83" height="9.90" fill="#59be42"/><rect x="83.42" y="21.00" width="9.83" height="9.90" fill="#69c671"/><rect x="93.85" y="21.00" width="9.83" height="9.90" fill="#69c6b6"/><rect x="104.28" y="21.00" width="9.83" height="9.90" fill="#43bfe6"/><rect x="114.71" y="21.00" width="9.83" height="9.90" fill="#3378c6"/><rect x="125.13" y="21.00" width="9.83" height="9.90" fill="#2a51ae"/><rect x="135.56" y="21.00" width="9.83" height="9.90" fill="#3a41a6"/><rect x="145.99" y="21.00" width="9.83" height="9.90" fill="#6841a6"/><rect x="156.42" y="21.00" width="9.83" height="9.90" fill="#a649a6"/><rect x="166.84" y="21.00" width="9.83" height="9.90" fill="#de4aa7"/><rect x="177.27" y="21.00" width="9.83" height="9.90" fill="#e61c79"/><rect x="0.00" y="31.50" width="9.83" height="9.90" fill="#df2a2a"/><rect x="10.43" y="31.50" width="9.83" height="9.90" fill="#e6732b"/><rect x="20.86" y="31.50" width="9.83" height="9.90" fill="#eea624"/><rect x="31.28" y="31.50" width="9.83" height="9.90" fill="#dfd839"/><rect x="41.71" y="31.50" width="9.83" height="9.90" fill="#a4c837"/><rect x="52.14" y="31.50" width="9.83" height="9.90" fill="#71c03e"/><rect x="62.57" y="31.50" width="9.83" height="9.90" fill="#5ab845"/><rect x="72.99" y="31.50" width="9.83" height="9.90" fill="#69c071"/><rect x="83.42" y="31.50" width="9.83" height="9.90" fill="#69c0b2"/><rect x="93.85" y="31.50" width="9.83" height="9.90" fill="#47bbdf"/><rect x="104.28" y="31.50" width="9.83" height="9.90" fill="#3778c0"/><rect x="114.71" y="31.50" width="9.83" height="9.90" fill="#2e52a9"/><rect x="125.13" y="31.50" width="9.83" height="9.90" fill="#3c43a1"/><rect x="135.56" y="31.50" width="9.83" height="9.90" fill="#6843a1"/><rect x="145.99" y="31.50" width="9.83" height="9.90" fill="#a14ba1"/><rect x="156.42" y="31.50" width="9.83" height="9.90" fill="#d74ea5"/><rect x="166.84" y="31.50" width="9.83" height="9.90" fill="#df237a"/><rect x="177.27" y="31.50" width="9.83" height="9.90" fill="#df2a2a"/><rect x="0.00" y="42.00" width="9.83" height="9.90" fill="#dd7534"/><rect x="10.43" y="42.00" width="9.83" height="9.90" fill="#e4a32f"/><rect x="20.86" y="42.00" width="9.83" height="9.90" fill="#d5cf40"/><rect x="31.28" y="42.00" width="9.83" height="9.90" fill="#9fbf3e"/><rect x="41.71" y="42.00" width="9.83" height="9.90" fill="#71b843"/><rect x="52.14" y="42.00" width="9.83" height="9.90" fill="#5cb149"/><rect x="62.57" y="42.00" width="9.83" height="9.90" fill="#6ab871"/><rect x="72.99" y="42.00" width="9.83" height="9.90" fill="#6ab8ab"/><rect x="83.42" y="42.00" width="9.83" height="9.90" fill="#4db5d5"/><rect x="93.85" y="42.00" width="9.83" height="9.90" fill="#3d77b8"/><rect x="104.28" y="42.00" width="9.83" height="9.90" fill="#3454a2"/><rect x="114.71" y="42.00" width="9.83" height="9.90" fill="#40469b"/><rect x="125.13" y="42.00" width="9.83" height="9.90" fill="#67469b"/><rect x="135.56" y="42.00" width="9.83" height="9.90" fill="#9b4d9b"/><rect x="145.99" y="42.00" width="9.83" height="9.90" fill="#ce53a1"/><rect x="156.42" y="42.00" width="9.83" height="9.90" fill="#d52d7b"/><rect x="166.84" y="42.00" width="9.83" height="9.90" fill="#d53434"/><rect x="177.27" y="42.00" width="9.83" height="9.90" fill="#dd7534"/><rect x="0.00" y="52.50" width="9.83" height="9.90" fill="#d8a03c"/><rect x="10.43" y="52.50" width="9.83" height="9.90" fill="#cac44a"/><rect x="20.86" y="52.50" width="9.83" height="9.90" fill="#99b546"/><rect x="31.28" y="52.50" width="9.83" height="9.90" fill="#71ae4a"/><rect x="41.71" y="52.50" width="9.83" height="9.90" fill="#5fa74e"/><rect x="52.14" y="52.50" width="9.83" height="9.90" fill="#6bae71"/><rect x="62.57" y="52.50" width="9.83" height="9.90" fill="#6baea3"/><rect x="72.99" y="52.50" width="9.83" height="9.90" fill="#55aeca"/><rect x="83.42" y="52.50" width="9.83" height="9.90" fill="#4476ae"/><rect x="93.85" y="52.50" width="9.83" height="9.90" fill="#3a5699"/><rect x="104.28" y="52.50" width="9.83" height="9.90" fill="#444a92"/><rect x="114.71" y="52.50" width="9.83" height="9.90" fill="#664a92"/><rect x="125.13" y="52.50" width="9.83" height="9.90" fill="#924f92"/><rect x="135.56" y="52.50" width="9.83" height="9.90" fill="#c3599c"/><rect x="145.99" y="52.50" width="9.83" height="9.90" fill="#ca397c"/><rect x="156.42" y="52.50" width="9.83" height="9.90" fill="#ca3f3f"/><rect x="166.84" y="52.50" width="9.83" height="9.90" fill="#d17840"/><rect x="177.27" y="52.50" width="9.83" height="9.90" fill="#d8a03c"/><rect x="0.00" y="63.00" width="9.83" height="4.50" fill="#c1bc50"/><rect x="10.43" y="63.00" width="9.83" height="4.50" fill="#94ad4a"/><rect x="20.86" y="63.00" width="9.83" height="4.50" fill="#70a64e"/><rect x="31.28" y="63.00" width="9.83" height="4.50" fill="#5f9f51"/><rect x="41.71" y="63.00" width="9.83" height="4.50" fill="#6ba670"/><rect x="52.14" y="63.00" width="9.83" height="4.50" fill="#6ba69c"/><rect x="62.57" y="63.00" width="9.83" height="4.50" fill="#59a8c1"/><rect x="72.99" y="63.00" width="9.83" height="4.50" fill="#4975a6"/><rect x="83.42" y="63.00" width="9.83" height="4.50" fill="#3f5792"/><rect x="93.85" y="63.00" width="9.83" height="4.50" fill="#474c8b"/><rect x="104.28" y="63.00" width="9.83" height="4.50" fill="#644c8b"/><rect x="114.71" y="63.00" width="9.83" height="4.50" fill="#8b508b"/><rect x="125.13" y="63.00" width="9.83" height="4.50" fill="#ba5d98"/><rect x="135.56" y="63.00" width="9.83" height="4.50" fill="#c1417c"/><rect x="145.99" y="63.00" width="9.83" height="4.50" fill="#c14646"/><rect x="156.42" y="63.00" width="9.83" height="4.50" fill="#c77947"/><rect x="166.84" y="63.00" width="9.83" height="4.50" fill="#ce9d44"/><rect x="177.27" y="63.00" width="9.83" height="4.50" fill="#c1bc50"/></svg>
<div class="abs" style="left:941.4px;top:284.8px;width:196.5000000000001px;height:13.899999999999977px;background:#1f1f1f;border-radius:3px;"></div>
<svg class="abs" style="left:945.5px;top:287px;" width="9" height="9" viewBox="0 0 9 9"><circle cx="3.600" cy="3.600" r="2.700" fill="none" stroke="#e8e8e8" stroke-width="1.200"/><path d="M5.600 5.600 L8.200 8.200" stroke="#e8e8e8" stroke-width="1.500" stroke-linecap="round"/></svg>
<div class="t" style="left:963.4px;top:286px;font-size:9.5px;line-height:11px;height:11px;color:#6c6c6c;transform:scaleX(0.950);">Search</div>
<div class="abs" style="left:934.4px;top:304.5px;width:211.60000000000002px;height:2.5px;background:#1a1a1a;"></div>
<div class="abs" style="left:934.4px;top:307px;width:211.60000000000002px;height:21.80000000000001px;background:#232323;"></div>
<div class="abs" style="left:940.4px;top:311.4px;width:3.300000000000068px;height:12.800000000000011px;background:#4b4b4b;border-radius:1.7px;"></div>
<div class="abs" style="left:948.7px;top:310px;width:35.299999999999955px;height:15.699999999999989px;background:#454545;border-radius:4px;"></div>
<div class="t" style="left:953.7px;top:312px;font-size:9.5px;line-height:11px;height:11px;color:#fff;transform:scaleX(0.816);font-weight:bold;">Layers</div>
<div class="t" style="left:988.8px;top:312px;font-size:9.5px;line-height:11px;height:11px;color:#cdcdcd;transform:scaleX(0.894);text-shadow:.25px 0 0 #cdcdcd;">Path Brushes</div>
<div class="t" style="left:1049.6px;top:312px;font-size:9.5px;line-height:11px;height:11px;color:#cdcdcd;transform:scaleX(0.881);text-shadow:.25px 0 0 #cdcdcd;">Quick FX</div>
<div class="t" style="left:1094.5px;top:312px;font-size:9.5px;line-height:11px;height:11px;color:#cdcdcd;transform:scaleX(0.908);text-shadow:.25px 0 0 #cdcdcd;">Styles</div>
<div class="abs" style="left:1125.4px;top:311.7px;width:13.199999999999818px;height:12.600000000000023px;border-radius:2.8px;border:1px solid #6e6e6e;"></div><svg class="abs" style="left:1128.0px;top:314.5px;" width="8" height="7" viewBox="0 0 8 7"><path d="M1.200 1.300 L4 5.800 L6.800 1.300" fill="none" stroke="#f0f0f0" stroke-width="1.400" stroke-linecap="round" stroke-linejoin="round"/></svg>
<div class="abs" style="left:934.4px;top:328.8px;width:211.60000000000002px;height:26.69999999999999px;background:#353535;"></div>
<div class="t" style="left:938.6px;top:338px;font-size:9.5px;line-height:11px;height:11px;color:#f4f4f4;transform:scaleX(0.907);text-shadow:.3px 0 0 #f4f4f4;">Opacity:</div>
<div class="abs" style="left:973.6px;top:335.3px;width:44.10000000000002px;height:15.699999999999989px;background:#3b3b3b;border-radius:3px;"></div>
<div class="abs" style="left:1006.7px;top:335.3px;width:0.7999999999999545px;height:15.699999999999989px;background:#353535;"></div>
<div class="t" style="left:975.4px;top:338px;font-size:9.5px;line-height:11px;height:11px;color:#7e7e7e;transform:scaleX(0.869);">100 %</div>
<svg class="abs" style="left:1011.4px;top:342.0px;" width="4.2" height="3.2" viewBox="0 0 4.2 3.2"><path d="M.3 .4 L2.1 2.700 L3.9000000000000004 .4" fill="none" stroke="#a8a8a8" stroke-width="1.200"/></svg>
<div class="abs" style="left:1021.4px;top:335.3px;width:85.60000000000002px;height:15.699999999999989px;background:#3b3b3b;border-radius:3px;"></div>
<div class="t" style="left:1024.5px;top:338px;font-size:9.5px;line-height:11px;height:11px;color:#7e7e7e;transform:scaleX(0.892);">Normal</div>
<svg class="abs" style="left:1098.5px;top:338.3px;" width="5" height="10" viewBox="0 0 5 10"><path d="M.5 3.300 L2.500 1.200 L4.500 3.300 M.5 6.700 L2.500 8.800 L4.500 6.700" fill="none" stroke="#8c8c8c" stroke-width="1.100"/></svg>
<svg class="abs" style="left:1111.5px;top:336.1px;" width="13" height="13" viewBox="0 0 13 13"><path d="M11.72 5.60 L11.72 7.40 L10.27 7.58 L9.93 8.40 L10.83 9.56 L9.56 10.83 L8.40 9.93 L7.58 10.27 L7.40 11.72 L5.60 11.72 L5.42 10.27 L4.60 9.93 L3.44 10.83 L2.17 9.56 L3.07 8.40 L2.73 7.58 L1.28 7.40 L1.28 5.60 L2.73 5.42 L3.07 4.60 L2.17 3.44 L3.44 2.17 L4.60 3.07 L5.42 2.73 L5.60 1.28 L7.40 1.28 L7.58 2.73 L8.40 3.07 L9.56 2.17 L10.83 3.44 L9.93 4.60 L10.27 5.42Z" fill="#f0f0f0" stroke="#f0f0f0" stroke-width=".6" stroke-linejoin="round"/><circle cx="6.5" cy="6.5" r="2" fill="#353535"/></svg>
<svg class="abs" style="left:1130px;top:337px;" width="8" height="11" viewBox="0 0 8 11"><path d="M2 5 V3.200 a2 2.200 0 0 1 4 0 V5" fill="none" stroke="#b9b9b9" stroke-width="1.200"/><rect x=".3" y="4.800" width="7.400" height="5.900" rx="1" fill="#b9b9b9"/></svg>
<div class="abs" style="left:934.4px;top:355.5px;width:211.60000000000002px;height:193.79999999999995px;background:#353535;"></div>
<div class="abs" style="left:941.4px;top:355.5px;width:7.2000000000000455px;height:193.79999999999995px;background:#2f2f2f;"></div>
<div class="abs" style="left:948.6px;top:355.5px;width:13.600000000000023px;height:193.79999999999995px;background:#393939;"></div>
<div class="abs" style="left:962.2px;top:355.5px;width:29.59999999999991px;height:193.79999999999995px;background:#3e3e3e;"></div>
<div class="abs" style="left:991.8px;top:355.5px;width:127.70000000000005px;height:193.79999999999995px;background:#383838;"></div>
<div class="abs" style="left:1119.5px;top:355.5px;width:26.5px;height:193.79999999999995px;background:#383838;"></div>
<div class="abs" style="left:940.9px;top:355.5px;width:0.8999999999999773px;height:193.79999999999995px;background:#2a2a2a;"></div>
<div class="abs" style="left:948.0px;top:355.5px;width:0.8999999999999773px;height:193.79999999999995px;background:#2a2a2a;"></div>
<div class="abs" style="left:1119.1px;top:355.5px;width:0.900000000000091px;height:193.79999999999995px;background:#2a2a2a;"></div>
<div class="abs" style="left:934.4px;top:355.0px;width:211.60000000000002px;height:1.0px;background:#262626;"></div>
<div class="abs" style="left:948.4px;top:371.0px;width:197.60000000000002px;height:1.0px;background:#292929;"></div>
<div class="abs" style="left:948.4px;top:400.55px;width:197.60000000000002px;height:1.0px;background:#292929;"></div>
<div class="abs" style="left:948.4px;top:430.1px;width:197.60000000000002px;height:1.0px;background:#292929;"></div>
<div class="abs" style="left:948.4px;top:459.65px;width:197.60000000000002px;height:1.0px;background:#292929;"></div>
<div class="abs" style="left:948.4px;top:489.2px;width:197.60000000000002px;height:1.0px;background:#292929;"></div>
<div class="abs" style="left:948.4px;top:518.75px;width:197.60000000000002px;height:1.0px;background:#292929;"></div>
<div class="abs" style="left:948.4px;top:548.8px;width:197.60000000000002px;height:1.0px;background:#292929;"></div>
<svg class="abs" style="left:962.2px;top:341.95px;" width="29.6" height="29.55" viewBox="0 0 29.6 29.55"><path d="M7.500 13.800 C6.800 18 6.500 22 7.500 25.500 C10.500 23 13.500 19.500 14.500 13.800 Z" fill="#2b1a19"/></svg>
<div class="abs" style="left:0;top:0;clip-path:inset(355.5px 0 0 0);width:1152px;height:720px;"><svg class="abs" style="left:951.5px;top:351.72499999999997px;" width="8" height="10" viewBox="0 0 8 10"><path d="M2.200 .3 V9.700" stroke="#b4b4b4" stroke-width="1.100"/><path d="M6.800 .8 C5.500 2.500 4 4 2.400 5 C4 6 5.500 7.500 6.800 9.200" fill="none" stroke="#b4b4b4" stroke-width="1"/><path d="M.3 5 H4.300" stroke="#b4b4b4" stroke-width="1"/><circle cx="2.300" cy="5" r="1.100" fill="#b4b4b4"/></svg><svg class="abs" style="left:1127.3px;top:353.42499999999995px;" width="9" height="6" viewBox="0 0 9 6"><path d="M.2 3 C2 -.4 7 -.4 8.800 3 C7 6.400 2 6.400 .2 3 Z" fill="#f4f4f4"/><circle cx="4.500" cy="3" r="1.550" fill="#2e2e2e"/></svg><div class="t" style="left:999.9px;top:352px;font-size:9.5px;line-height:11px;height:11px;color:#6d6d6d;transform:scaleX(0.884);">Curve</div></div>
<svg class="abs" style="left:962.2px;top:371.5px;" width="29.6" height="29.55" viewBox="0 0 29.6 29.55"><path d="M6 1 C3 8 5 14 9 18 C12 21 17 23 21 29 C24 22 22 16 18 12 C14 8 12 5 11 1 Z" fill="#2b1a19"/></svg>
<div class="abs" style="left:0;top:0;clip-path:inset(355.5px 0 0 0);width:1152px;height:720px;"><svg class="abs" style="left:951.5px;top:381.275px;" width="8" height="10" viewBox="0 0 8 10"><path d="M2.200 .3 V9.700" stroke="#b4b4b4" stroke-width="1.100"/><path d="M6.800 .8 C5.500 2.500 4 4 2.400 5 C4 6 5.500 7.500 6.800 9.200" fill="none" stroke="#b4b4b4" stroke-width="1"/><path d="M.3 5 H4.300" stroke="#b4b4b4" stroke-width="1"/><circle cx="2.300" cy="5" r="1.100" fill="#b4b4b4"/></svg><svg class="abs" style="left:1127.3px;top:382.97499999999997px;" width="9" height="6" viewBox="0 0 9 6"><path d="M.2 3 C2 -.4 7 -.4 8.800 3 C7 6.400 2 6.400 .2 3 Z" fill="#f4f4f4"/><circle cx="4.500" cy="3" r="1.550" fill="#2e2e2e"/></svg><div class="t" style="left:999.9px;top:381px;font-size:9.5px;line-height:11px;height:11px;color:#6d6d6d;transform:scaleX(0.884);">Curve</div></div>
<svg class="abs" style="left:962.2px;top:401.05px;" width="29.6" height="29.55" viewBox="0 0 29.6 29.55"><path d="M4 7 C9 7 14 5 18 1 C24 8 23 18 20 24 C18 28 14 30 8 30 C12 24 13 16 4 7 Z" fill="#2b1a19"/></svg>
<div class="abs" style="left:0;top:0;clip-path:inset(355.5px 0 0 0);width:1152px;height:720px;"><svg class="abs" style="left:951.5px;top:410.825px;" width="8" height="10" viewBox="0 0 8 10"><path d="M2.200 .3 V9.700" stroke="#b4b4b4" stroke-width="1.100"/><path d="M6.800 .8 C5.500 2.500 4 4 2.400 5 C4 6 5.500 7.500 6.800 9.200" fill="none" stroke="#b4b4b4" stroke-width="1"/><path d="M.3 5 H4.300" stroke="#b4b4b4" stroke-width="1"/><circle cx="2.300" cy="5" r="1.100" fill="#b4b4b4"/></svg><svg class="abs" style="left:1127.3px;top:412.525px;" width="9" height="6" viewBox="0 0 9 6"><path d="M.2 3 C2 -.4 7 -.4 8.800 3 C7 6.400 2 6.400 .2 3 Z" fill="#f4f4f4"/><circle cx="4.500" cy="3" r="1.550" fill="#2e2e2e"/></svg><div class="t" style="left:999.9px;top:411px;font-size:9.5px;line-height:11px;height:11px;color:#6d6d6d;transform:scaleX(0.884);">Curve</div></div>
<svg class="abs" style="left:962.2px;top:430.6px;" width="29.6" height="29.55" viewBox="0 0 29.6 29.55"><rect x="8.500" y="4" width="9" height="21" rx="3.800" fill="none" stroke="#2b1a19" stroke-width="1.600"/><path d="M9 25 V30" stroke="#2b1a19" stroke-width="1.600"/></svg>
<div class="abs" style="left:0;top:0;clip-path:inset(355.5px 0 0 0);width:1152px;height:720px;"><svg class="abs" style="left:951.5px;top:440.375px;" width="8" height="10" viewBox="0 0 8 10"><path d="M2.200 .3 V9.700" stroke="#b4b4b4" stroke-width="1.100"/><path d="M6.800 .8 C5.500 2.500 4 4 2.400 5 C4 6 5.500 7.500 6.800 9.200" fill="none" stroke="#b4b4b4" stroke-width="1"/><path d="M.3 5 H4.300" stroke="#b4b4b4" stroke-width="1"/><circle cx="2.300" cy="5" r="1.100" fill="#b4b4b4"/></svg><svg class="abs" style="left:1127.3px;top:442.075px;" width="9" height="6" viewBox="0 0 9 6"><path d="M.2 3 C2 -.4 7 -.4 8.800 3 C7 6.400 2 6.400 .2 3 Z" fill="#f4f4f4"/><circle cx="4.500" cy="3" r="1.550" fill="#2e2e2e"/></svg><div class="t" style="left:999.9px;top:440px;font-size:9.5px;line-height:11px;height:11px;color:#6d6d6d;transform:scaleX(0.884);">Curve</div></div>
<svg class="abs" style="left:962.2px;top:460.15px;" width="29.6" height="29.55" viewBox="0 0 29.6 29.55"><path d="M2 13 C2 5 7 1.500 13 1.500 C18 1.500 21.500 4 22.500 7 C26 7 28 9 28 12.500 C28 16 26 18 23 18 C22 24 18 27.500 12 27.500 C5 27.500 2 22 2 13 Z" fill="none" stroke="#2b1a19" stroke-width="1.300"/></svg>
<div class="abs" style="left:0;top:0;clip-path:inset(355.5px 0 0 0);width:1152px;height:720px;"><svg class="abs" style="left:951.5px;top:469.92499999999995px;" width="8" height="10" viewBox="0 0 8 10"><path d="M2.200 .3 V9.700" stroke="#b4b4b4" stroke-width="1.100"/><path d="M6.800 .8 C5.500 2.500 4 4 2.400 5 C4 6 5.500 7.500 6.800 9.200" fill="none" stroke="#b4b4b4" stroke-width="1"/><path d="M.3 5 H4.300" stroke="#b4b4b4" stroke-width="1"/><circle cx="2.300" cy="5" r="1.100" fill="#b4b4b4"/></svg><svg class="abs" style="left:1127.3px;top:471.62499999999994px;" width="9" height="6" viewBox="0 0 9 6"><path d="M.2 3 C2 -.4 7 -.4 8.800 3 C7 6.400 2 6.400 .2 3 Z" fill="#f4f4f4"/><circle cx="4.500" cy="3" r="1.550" fill="#2e2e2e"/></svg><div class="t" style="left:999.9px;top:470px;font-size:9.5px;line-height:11px;height:11px;color:#6d6d6d;transform:scaleX(0.884);">Curve</div></div>
<svg class="abs" style="left:962.2px;top:489.7px;" width="29.6" height="29.55" viewBox="0 0 29.6 29.55"><ellipse cx="14.500" cy="14.500" rx="12.500" ry="10.500" fill="none" stroke="#2b1a19" stroke-width="1.400"/></svg>
<div class="abs" style="left:0;top:0;clip-path:inset(355.5px 0 0 0);width:1152px;height:720px;"><svg class="abs" style="left:951.5px;top:499.47499999999997px;" width="8" height="10" viewBox="0 0 8 10"><path d="M2.200 .3 V9.700" stroke="#b4b4b4" stroke-width="1.100"/><path d="M6.800 .8 C5.500 2.500 4 4 2.400 5 C4 6 5.500 7.500 6.800 9.200" fill="none" stroke="#b4b4b4" stroke-width="1"/><path d="M.3 5 H4.300" stroke="#b4b4b4" stroke-width="1"/><circle cx="2.300" cy="5" r="1.100" fill="#b4b4b4"/></svg><svg class="abs" style="left:1127.3px;top:501.17499999999995px;" width="9" height="6" viewBox="0 0 9 6"><path d="M.2 3 C2 -.4 7 -.4 8.800 3 C7 6.400 2 6.400 .2 3 Z" fill="#f4f4f4"/><circle cx="4.500" cy="3" r="1.550" fill="#2e2e2e"/></svg><div class="t" style="left:999.9px;top:499px;font-size:9.5px;line-height:11px;height:11px;color:#6d6d6d;transform:scaleX(0.884);">Curve</div></div>
<svg class="abs" style="left:951.8px;top:529.525px;" width="7" height="9" viewBox="0 0 7 9"><rect x=".5" y=".5" width="6" height="8" rx="1" fill="none" stroke="#b4b4b4" stroke-width=".9"/><path d="M2 3 H5 M3.500 3 V6.500 M2.500 6.500 H4.500" stroke="#b4b4b4" stroke-width=".8" fill="none"/></svg>
<div class="t" style="left:962.8px;top:530px;font-size:6.5px;line-height:7px;height:7px;color:#2b1a19;transform:scaleX(1.049);font-weight:bold;">C O M</div>
<svg class="abs" style="left:1127.3px;top:530.725px;" width="9" height="6" viewBox="0 0 9 6"><path d="M.2 3 C2 -.4 7 -.4 8.800 3 C7 6.400 2 6.400 .2 3 Z" fill="#f4f4f4"/><circle cx="4.500" cy="3" r="1.550" fill="#2e2e2e"/></svg>
<div class="t" style="left:999.9px;top:529px;font-size:9.5px;line-height:11px;height:11px;color:#6d6d6d;transform:scaleX(0.975);">COM</div>
<div class="abs" style="left:934.4px;top:549.3px;width:211.60000000000002px;height:27.40000000000009px;background:#353535;"></div>
<div class="abs" style="left:934.4px;top:548.9px;width:211.60000000000002px;height:0.8000000000000682px;background:#262626;"></div>
<svg class="abs" style="left:940.2px;top:557.3px;" width="14" height="14" viewBox="0 0 14 14"><path d="M8.500 1.800 H2.200 a1.500 1.500 0 0 0 -1.500 1.500 V11 a1.500 1.500 0 0 0 1.500 1.500 H9.800 a1.500 1.500 0 0 0 1.500 -1.500 V5.500" fill="none" stroke="#e6e6e6" stroke-width="1.200"/><path d="M4.300 9.700 L5 7.300 L11.300 .8 L13 2.500 L6.700 9 Z" fill="#353535" stroke="#e6e6e6" stroke-width="1"/></svg>
<div class="abs" style="left:981.8px;top:557.3px;width:14.0px;height:13.700000000000045px;background:#e6e6e6;border-radius:2px;"></div>
<div class="t" style="left:983.3px;top:560px;font-size:9px;line-height:10px;height:10px;color:#111;transform:scaleX(0.956);font-weight:bold;">FX</div>
<div class="abs" style="left:1000px;top:557.3px;width:13.299999999999955px;height:13.700000000000045px;background:#e6e6e6;border-radius:2px;"></div>
<div class="abs" style="left:1003.1px;top:560.6px;width:7.100000000000023px;height:7.100000000000023px;background:#141414;border-radius:3.6px;"></div>
<svg class="abs" style="left:1018.4px;top:557.3px;" width="11.5" height="13.7" viewBox="0 0 11.5 13.7"><path d="M.3 .3 H11.200 V2.300 C9.500 4.500 8 5.800 8 6.850 C8 7.900 9.500 9.200 11.200 11.400 V13.400 H.3 V11.400 C2 9.200 3.500 7.900 3.500 6.850 C3.500 5.800 2 4.500 .3 2.300 Z" fill="#e6e6e6"/></svg>
<svg class="abs" style="left:1035px;top:557.3px;" width="13.6" height="13.7" viewBox="0 0 13.6 13.7"><circle cx="6.800" cy="6.850" r="6" fill="none" stroke="#e6e6e6" stroke-width="1.200"/><path d="M2.600 11.100 A6 6 0 0 0 11 2.600 Z" fill="#e6e6e6"/></svg>
<svg class="abs" style="left:1072.9px;top:557.3px;" width="14" height="13.7" viewBox="0 0 14 13.7"><rect x=".6" y=".6" width="12.800" height="12.500" rx="1.800" fill="none" stroke="#e6e6e6" stroke-width="1.200"/><rect x="2.600" y="2.600" width="8.800" height="8.500" fill="#e6e6e6"/><circle cx="6.300" cy="6.300" r="2.900" fill="#353535"/><path d="M6.500 11.100 C6.500 9 8.500 8 11.400 8 V11.100 Z" fill="#353535"/></svg>
<svg class="abs" style="left:1091px;top:558px;" width="13.5" height="13" viewBox="0 0 13.5 13"><path d="M.6 12 V1.800 a1 1 0 0 1 1-1 H5 L6.500 2.600 H12 a1 1 0 0 1 1 1 V12 Z" fill="none" stroke="#e6e6e6" stroke-width="1.200" stroke-linejoin="round"/><path d="M.6 5 H13" stroke="#e6e6e6" stroke-width="1.100"/></svg>
<svg class="abs" style="left:1108.4px;top:557.6px;" width="12.6" height="13" viewBox="0 0 12.6 13"><rect x="0.00" y="0.00" width="2.520" height="2.600" fill="#e6e6e6"/><rect x="5.04" y="0.00" width="2.520" height="2.600" fill="#e6e6e6"/><rect x="10.08" y="0.00" width="2.520" height="2.600" fill="#e6e6e6"/><rect x="2.52" y="2.60" width="2.520" height="2.600" fill="#e6e6e6"/><rect x="7.56" y="2.60" width="2.520" height="2.600" fill="#e6e6e6"/><rect x="0.00" y="5.20" width="2.520" height="2.600" fill="#e6e6e6"/><rect x="5.04" y="5.20" width="2.520" height="2.600" fill="#e6e6e6"/><rect x="10.08" y="5.20" width="2.520" height="2.600" fill="#e6e6e6"/><rect x="2.52" y="7.80" width="2.520" height="2.600" fill="#e6e6e6"/><rect x="7.56" y="7.80" width="2.520" height="2.600" fill="#e6e6e6"/><rect x="0.00" y="10.40" width="2.520" height="2.600" fill="#e6e6e6"/><rect x="5.04" y="10.40" width="2.520" height="2.600" fill="#e6e6e6"/><rect x="10.08" y="10.40" width="2.520" height="2.600" fill="#e6e6e6"/></svg>
<svg class="abs" style="left:1127.3px;top:557.3px;" width="11" height="14" viewBox="0 0 11 14"><path d="M.3 3 H10.700 M3.500 3 V1.500 a.8 .8 0 0 1 .8-.8 H6.700 a.8 .8 0 0 1 .8 .8 V3" fill="none" stroke="#e6e6e6" stroke-width="1.200"/><path d="M1.500 3.500 L2.100 12.300 a1 1 0 0 0 1 1 H7.900 a1 1 0 0 0 1-1 L9.500 3.500" fill="none" stroke="#e6e6e6" stroke-width="1.200"/><path d="M4.200 5.500 V11 M6.800 5.500 V11" stroke="#e6e6e6" stroke-width="1"/></svg>
<div class="abs" style="left:934.4px;top:576.2px;width:211.60000000000002px;height:2.099999999999909px;background:#1a1a1a;"></div>
<div class="abs" style="left:934.4px;top:578.3px;width:211.60000000000002px;height:22.0px;background:#232323;"></div>
<div class="abs" style="left:940.4px;top:582px;width:3.3999999999999773px;height:14.5px;background:#4b4b4b;border-radius:1.7px;"></div>
<div class="abs" style="left:948.7px;top:581.2px;width:48.799999999999955px;height:15.599999999999909px;background:#454545;border-radius:4px;"></div>
<div class="t" style="left:954.0px;top:584px;font-size:9.5px;line-height:11px;height:11px;color:#fff;transform:scaleX(0.818);font-weight:bold;">Transform</div>
<div class="t" style="left:1002.5px;top:584px;font-size:9.5px;line-height:11px;height:11px;color:#cdcdcd;transform:scaleX(0.903);text-shadow:.25px 0 0 #cdcdcd;">Navigator</div>
<div class="t" style="left:1049.5px;top:584px;font-size:9.5px;line-height:11px;height:11px;color:#cdcdcd;transform:scaleX(0.920);text-shadow:.25px 0 0 #cdcdcd;">History</div>
<div class="abs" style="left:1125.2px;top:582.7px;width:13.200000000000045px;height:12.699999999999932px;border-radius:2.8px;border:1px solid #6e6e6e;"></div><svg class="abs" style="left:1127.8000000000002px;top:585.55px;" width="8" height="7" viewBox="0 0 8 7"><path d="M1.200 1.300 L4 5.800 L6.800 1.300" fill="none" stroke="#f0f0f0" stroke-width="1.400" stroke-linecap="round" stroke-linejoin="round"/></svg>
<svg class="abs" style="left:948.8px;top:621px;" width="30" height="30" viewBox="0 0 30 30"><rect x="2" y="2" width="26" height="26" fill="#5c5c5c"/><rect x="0.3" y="0.3" width="3.400" height="3.400" fill="#686868"/><rect x="13.3" y="0.3" width="3.400" height="3.400" fill="#686868"/><rect x="26.3" y="0.3" width="3.400" height="3.400" fill="#686868"/><rect x="0.3" y="13.3" width="3.400" height="3.400" fill="#686868"/><rect x="13.3" y="13.3" width="3.400" height="3.400" fill="#686868"/><rect x="26.3" y="13.3" width="3.400" height="3.400" fill="#686868"/><rect x="0.3" y="26.3" width="3.400" height="3.400" fill="#686868"/><rect x="13.3" y="26.3" width="3.400" height="3.400" fill="#686868"/><rect x="26.3" y="26.3" width="3.400" height="3.400" fill="#686868"/></svg>
<div class="t" style="left:997.5px;top:614px;font-size:9.5px;line-height:11px;height:11px;color:#f4f4f4;transform:scaleX(0.836);text-shadow:.3px 0 0 #f4f4f4;">X:</div><div class="abs" style="left:1009.5px;top:612.5px;width:46.299999999999955px;height:13.5px;background:#3a3a3a;border-radius:3px;"></div><div class="t" style="left:1011.5px;top:614px;font-size:9.5px;line-height:11px;height:11px;color:#757575;transform:scaleX(0.980);">0 pt</div>
<div class="t" style="left:1066.0px;top:614px;font-size:9.5px;line-height:11px;height:11px;color:#f4f4f4;transform:scaleX(0.901);text-shadow:.3px 0 0 #f4f4f4;">W:</div><div class="abs" style="left:1079.5px;top:612.5px;width:46.700000000000045px;height:13.5px;background:#3a3a3a;border-radius:3px;"></div><div class="t" style="left:1081.5px;top:614px;font-size:9.5px;line-height:11px;height:11px;color:#757575;transform:scaleX(0.980);">0 pt</div>
<div class="t" style="left:997.5px;top:631px;font-size:9.5px;line-height:11px;height:11px;color:#f4f4f4;transform:scaleX(0.887);text-shadow:.3px 0 0 #f4f4f4;">Y:</div><div class="abs" style="left:1009.5px;top:630px;width:46.299999999999955px;height:13.299999999999955px;background:#3a3a3a;border-radius:3px;"></div><div class="t" style="left:1011.5px;top:631px;font-size:9.5px;line-height:11px;height:11px;color:#757575;transform:scaleX(0.980);">0 pt</div>
<div class="t" style="left:1067.3px;top:631px;font-size:9.5px;line-height:11px;height:11px;color:#f4f4f4;transform:scaleX(0.947);text-shadow:.3px 0 0 #f4f4f4;">H:</div><div class="abs" style="left:1079.5px;top:630px;width:46.700000000000045px;height:13.299999999999955px;background:#3a3a3a;border-radius:3px;"></div><div class="t" style="left:1081.5px;top:631px;font-size:9.5px;line-height:11px;height:11px;color:#757575;transform:scaleX(0.980);">0 pt</div>
<div class="t" style="left:997.5px;top:653px;font-size:9.5px;line-height:11px;height:11px;color:#f4f4f4;transform:scaleX(0.789);text-shadow:.3px 0 0 #f4f4f4;">R:</div><div class="abs" style="left:1009.5px;top:651.3px;width:46.299999999999955px;height:13.0px;background:#3a3a3a;border-radius:3px;"></div><div class="t" style="left:1011.5px;top:652px;font-size:9.5px;line-height:11px;height:11px;color:#757575;transform:scaleX(0.980);">0 °</div><div class="abs" style="left:1045.8px;top:651.3px;width:0.7999999999999545px;height:13.0px;background:#333;"></div><svg class="abs" style="left:1048.9px;top:656.3px;" width="4.2" height="3.2" viewBox="0 0 4.2 3.2"><path d="M.3 .4 L2.1 2.700 L3.9000000000000004 .4" fill="none" stroke="#9a9a9a" stroke-width="1.200"/></svg>
<div class="t" style="left:1068.0px;top:653px;font-size:9.5px;line-height:11px;height:11px;color:#f4f4f4;transform:scaleX(0.891);text-shadow:.3px 0 0 #f4f4f4;">S:</div><div class="abs" style="left:1079.5px;top:651.3px;width:46.700000000000045px;height:13.0px;background:#3a3a3a;border-radius:3px;"></div><div class="t" style="left:1081.5px;top:652px;font-size:9.5px;line-height:11px;height:11px;color:#757575;transform:scaleX(0.980);">0 °</div><div class="abs" style="left:1116.2px;top:651.3px;width:0.7999999999999545px;height:13.0px;background:#333;"></div><svg class="abs" style="left:1119.3000000000002px;top:656.3px;" width="4.2" height="3.2" viewBox="0 0 4.2 3.2"><path d="M.3 .4 L2.1 2.700 L3.9000000000000004 .4" fill="none" stroke="#9a9a9a" stroke-width="1.200"/></svg>
<svg class="abs" style="left:1130px;top:617.3px;" width="7" height="21" viewBox="0 0 7 21"><path d="M0 .6 H3.500 V3 M0 20.400 H3.500 V18" fill="none" stroke="#d8d8d8" stroke-width="1"/><rect x="1.800" y="3" width="3.800" height="6.500" rx="1.800" fill="none" stroke="#e4e4e4" stroke-width="1.100"/><rect x="1.800" y="11.500" width="3.800" height="6.500" rx="1.800" fill="none" stroke="#e4e4e4" stroke-width="1.100"/><path d="M3.700 7.500 V13.500" stroke="#e4e4e4" stroke-width="1.200"/></svg>
<svg class="abs" style="left:1100px;top:671.5px;" width="13" height="12" viewBox="0 0 13 12"><rect x=".6" y=".6" width="11.300" height="10.300" rx="1" fill="none" stroke="#e0e0e0" stroke-width="1.100" stroke-dasharray="3 1.600"/><rect x="0" y="4.600" width="7.400" height="6.900" rx="1.600" fill="#efefef"/></svg>
<svg class="abs" style="left:1120.4px;top:676.5px;" width="4.2" height="3.2" viewBox="0 0 4.2 3.2"><path d="M.3 .4 L2.1 2.700 L3.9000000000000004 .4" fill="none" stroke="#e0e0e0" stroke-width="1.200"/></svg>
</section>
<section id="status">
<div class="abs" style="left:6px;top:697.5px;width:1140px;height:16.5px;background:#353535;"></div>
<div class="abs" style="left:6px;top:696.8px;width:1140px;height:1.0px;background:#212121;"></div>
<div class="abs" style="left:933px;top:697.5px;width:1.3999999999999773px;height:16.5px;background:#1a1a1a;"></div>
<svg class="abs" style="left:15.2px;top:700.7px;" width="9" height="8.4" viewBox="0 0 9 8.4"><path d="M.8 0 V8.400" stroke="#d6d6d6" stroke-width="1.300"/><path d="M8.900 0 V8.400 L2.500 4.200 Z" fill="#d6d6d6"/></svg>
<svg class="abs" style="left:31.2px;top:700.7px;" width="7.6" height="8.4" viewBox="0 0 7.6 8.4"><path d="M7.600 0 V8.400 L0 4.200 Z" fill="#d6d6d6"/></svg>
<div class="abs" style="left:42.3px;top:698.8px;width:78.9px;height:12.900000000000091px;background:#212121;border-radius:3px;"></div>
<div class="t" style="left:68.6px;top:698px;font-size:9.5px;line-height:11px;height:11px;color:#fff;transform:scaleX(0.904);font-weight:bold;">5 of 20</div>
<svg class="abs" style="left:123.8px;top:700.7px;" width="7" height="8.4" viewBox="0 0 7 8.4"><path d="M0 0 V8.400 L6.700 4.200 Z" fill="#d6d6d6"/></svg>
<svg class="abs" style="left:136.8px;top:700.7px;" width="9.6" height="8.4" viewBox="0 0 9.6 8.4"><path d="M8.800 0 V8.400" stroke="#d6d6d6" stroke-width="1.300"/><path d="M0 0 V8.400 L6.800 4.200 Z" fill="#d6d6d6"/></svg>
<svg class="abs" style="left:153px;top:699.7px;" width="9.6" height="10.5" viewBox="0 0 9.6 10.5"><rect x=".6" y=".6" width="8.400" height="9.300" rx="1.200" fill="#3a3a3a" stroke="#4e4e4e" stroke-width="1"/></svg>
<svg class="abs" style="left:167.4px;top:702px;" width="9.6" height="6" viewBox="0 0 9.6 6"><path d="M.5 3 C2.300 .3 7.300 .3 9.100 3 C7.300 5.700 2.300 5.700 .5 3 Z" fill="none" stroke="#444" stroke-width="1"/><circle cx="4.800" cy="3" r="1.200" fill="#444"/></svg>
<svg class="abs" style="left:182.7px;top:699.5px;" width="10.1" height="11.5" viewBox="0 0 10.1 11.5"><rect x=".6" y=".6" width="6.800" height="8.400" rx="1" fill="none" stroke="#d6d6d6" stroke-width="1.150"/><path d="M3.200 10.900 H9.500 V2.800" fill="none" stroke="#d6d6d6" stroke-width="1.150"/></svg>
<svg class="abs" style="left:198.9px;top:699.5px;" width="9.5" height="11.5" viewBox="0 0 9.5 11.5"><rect x=".6" y=".6" width="6.600" height="8.400" rx="1" fill="none" stroke="#7d7d7d" stroke-width="1.100"/><path d="M3.200 10.900 H9 V2.800" fill="none" stroke="#7d7d7d" stroke-width="1.100"/><path d="M2.200 3 H5.600 M2.200 4.900 H5.600 M2.200 6.800 H5.600" stroke="#7d7d7d" stroke-width=".8"/></svg>
<div class="t" style="left:229.8px;top:700px;font-size:9px;line-height:10px;height:10px;color:#fff;transform:scaleX(0.932);font-weight:bold;">Drag</div>
<div class="t" style="left:251.7px;top:700px;font-size:9px;line-height:10px;height:10px;color:#c6c6c6;transform:scaleX(0.963);">to marquee select.</div>
<div class="t" style="left:326.2px;top:700px;font-size:9px;line-height:10px;height:10px;color:#fff;transform:scaleX(0.916);font-weight:bold;">Click</div>
<div class="t" style="left:348.8px;top:700px;font-size:9px;line-height:10px;height:10px;color:#c6c6c6;transform:scaleX(0.986);">an object to select it.</div>
<div class="t" style="left:432px;top:700px;font-size:12px;line-height:15px;height:15px;color:#fff;font-weight:bold;font-family:'DejaVu Sans',sans-serif">⌃</div>
<div class="t" style="left:442.3px;top:700px;font-size:9px;line-height:10px;height:10px;color:#c6c6c6;transform:scaleX(0.975);">during marquee select to toggle intersection behaviour.</div>
<div class="t" style="left:939.2px;top:700px;font-size:9.5px;line-height:11px;height:11px;color:#fff;transform:scaleX(0.848);text-shadow:.35px 0 0 #fff;">ZOO POSTCARDS.ai (37.1%)</div>
</section>
</div>
</body>
</html>
